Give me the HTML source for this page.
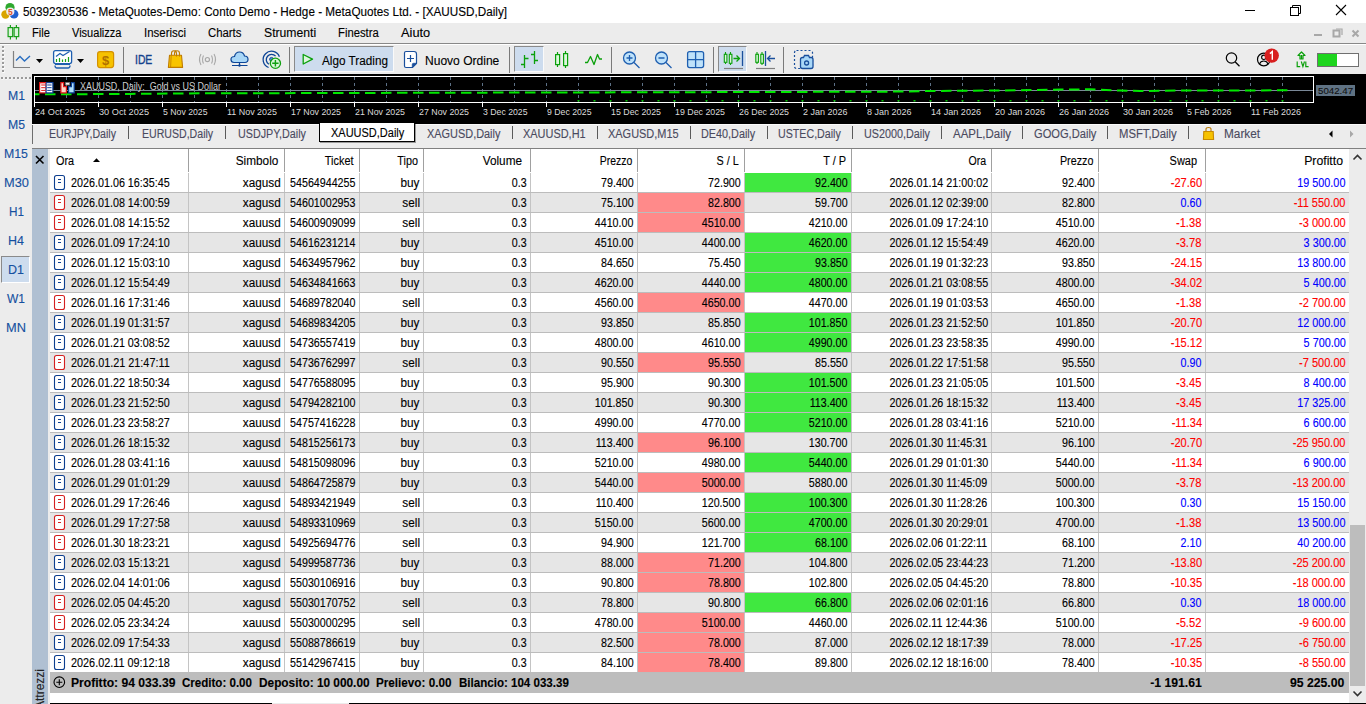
<!DOCTYPE html><html><head><meta charset="utf-8"><style>
html,body{margin:0;padding:0;}
body{width:1366px;height:704px;overflow:hidden;position:relative;background:#ececec;font-family:"Liberation Sans",sans-serif;}
.t{position:absolute;white-space:pre;-webkit-text-stroke:0.12px currentColor;}
.b{position:absolute;}
.s{position:absolute;overflow:visible;}
</style></head><body>
<div class="b" style="left:0px;top:0px;width:1366px;height:23px;background:#ffffff;"></div>
<div class="t" style="left:22.80px;top:4.34px;font-size:12px;line-height:16px;color:#000;font-weight:normal;transform:scaleX(0.9768);transform-origin:0 0;">5039230536 - MetaQuotes-Demo: Conto Demo - Hedge - MetaQuotes Ltd. - [XAUUSD,Daily]</div>
<svg class="s" style="left:0px;top:0px" width="20" height="20" viewBox="0 0 20 20"><circle cx="10" cy="7.5" r="4.6" fill="#2ea82e"/><circle cx="5.5" cy="14.5" r="4.2" fill="#d9a400"/><circle cx="14" cy="14.2" r="4.4" fill="#1f5fd0"/><circle cx="10.3" cy="11.6" r="4.1" fill="#eeeeee"/><text x="10.4" y="15" font-size="8.5" font-family="Liberation Sans" font-weight="bold" fill="#e0501e" text-anchor="middle">5</text></svg>
<div class="b" style="left:1245px;top:10px;width:10px;height:1px;background:#000;"></div>
<svg class="s" style="left:1289px;top:4px" width="13" height="13" viewBox="0 0 13 13"><rect x="1.5" y="3.5" width="8" height="8" fill="none" stroke="#000"/><path d="M3.5 3.5V1.5H11.5V9.5H9.5" fill="none" stroke="#000"/></svg>
<svg class="s" style="left:1335px;top:4px" width="13" height="13" viewBox="0 0 13 13"><path d="M1 1L11 11M11 1L1 11" stroke="#000" stroke-width="1.1"/></svg>
<div class="b" style="left:0px;top:23px;width:1366px;height:20px;background:#ececec;"></div>
<div class="b" style="left:0px;top:43px;width:1366px;height:1px;background:#888888;"></div>
<div class="b" style="left:0px;top:44px;width:1366px;height:1px;background:#ffffff;"></div>
<svg class="s" style="left:7px;top:24px" width="14" height="17" viewBox="0 0 14 17"><path d="M3.4 1V15.5M9.4 1V15.5" stroke="#1a9e1a" stroke-width="1.2"/><rect x="1.1" y="3.6" width="4.6" height="9" fill="#d8f5d8" stroke="#1a9e1a" stroke-width="1.2"/><rect x="7.1" y="3.6" width="4.6" height="9" fill="#d8f5d8" stroke="#1a9e1a" stroke-width="1.2"/></svg>
<div class="t" style="left:32.00px;top:24.54px;font-size:12px;line-height:16px;color:#000;font-weight:normal;transform:scaleX(0.9317);transform-origin:0 0;">File</div>
<div class="t" style="left:72.30px;top:24.54px;font-size:12px;line-height:16px;color:#000;font-weight:normal;transform:scaleX(0.9187);transform-origin:0 0;">Visualizza</div>
<div class="t" style="left:143.90px;top:24.54px;font-size:12px;line-height:16px;color:#000;font-weight:normal;transform:scaleX(0.9537);transform-origin:0 0;">Inserisci</div>
<div class="t" style="left:208.20px;top:24.54px;font-size:12px;line-height:16px;color:#000;font-weight:normal;transform:scaleX(0.9463);transform-origin:0 0;">Charts</div>
<div class="t" style="left:263.80px;top:24.54px;font-size:12px;line-height:16px;color:#000;font-weight:normal;transform:scaleX(1.0164);transform-origin:0 0;">Strumenti</div>
<div class="t" style="left:338.00px;top:24.54px;font-size:12px;line-height:16px;color:#000;font-weight:normal;transform:scaleX(0.9392);transform-origin:0 0;">Finestra</div>
<div class="t" style="left:400.80px;top:24.54px;font-size:12px;line-height:16px;color:#000;font-weight:normal;transform:scaleX(1.0673);transform-origin:0 0;">Aiuto</div>
<div class="b" style="left:1314px;top:34px;width:8px;height:2px;background:#a8a8a8;"></div>
<svg class="s" style="left:1332px;top:27px" width="11" height="11" viewBox="0 0 11 11"><rect x="1.5" y="3.5" width="6" height="6" fill="none" stroke="#a8a8a8" stroke-width="2"/><path d="M4 2H10V8" fill="none" stroke="#a8a8a8" stroke-width="1.2"/></svg>
<svg class="s" style="left:1351px;top:29px" width="10" height="9" viewBox="0 0 10 9"><path d="M1.5 1.5L7.5 7.5M7.5 1.5L1.5 7.5" stroke="#a8a8a8" stroke-width="2"/></svg>
<div class="b" style="left:0px;top:45px;width:1366px;height:29px;background:#ececec;"></div>
<svg class="s" style="left:0px;top:0px" width="4" height="80" viewBox="0 0 4 80"><rect x="2.5" y="47" width="2" height="2" fill="#fff"/><rect x="2" y="46" width="2" height="2" fill="#9a9a9a"/><rect x="2.5" y="51" width="2" height="2" fill="#fff"/><rect x="2" y="50" width="2" height="2" fill="#9a9a9a"/><rect x="2.5" y="55" width="2" height="2" fill="#fff"/><rect x="2" y="54" width="2" height="2" fill="#9a9a9a"/><rect x="2.5" y="59" width="2" height="2" fill="#fff"/><rect x="2" y="58" width="2" height="2" fill="#9a9a9a"/><rect x="2.5" y="63" width="2" height="2" fill="#fff"/><rect x="2" y="62" width="2" height="2" fill="#9a9a9a"/><rect x="2.5" y="67" width="2" height="2" fill="#fff"/><rect x="2" y="66" width="2" height="2" fill="#9a9a9a"/><rect x="2.5" y="71" width="2" height="2" fill="#fff"/><rect x="2" y="70" width="2" height="2" fill="#9a9a9a"/></svg>
<svg class="s" style="left:0px;top:44px" width="140" height="30" viewBox="0 0 140 30"><path d="M13.5 7V23.5H30" fill="none" stroke="#808080" stroke-width="1.2"/><path d="M16 16.5L20 12.5L24.5 17L30 12" fill="none" stroke="#2a6ec0" stroke-width="1.4"/><path d="M36 15H43L39.5 19Z" fill="#000"/><rect x="53.6" y="6.6" width="18" height="13" rx="2" fill="#fff" stroke="#1f5fb0" stroke-width="1.3"/><path d="M56 12.5L60 9.5L63 11.5L69.5 7.5" fill="none" stroke="#1f5fb0" stroke-width="1.2"/><path d="M56.5 18V15M59.5 18V14M62.5 18V15.5M65.5 18V15M68.5 18V13" stroke="#19a019" stroke-width="1.2"/><path d="M55 21.5Q55 24 57 24H68Q70 24 70 21.5" fill="none" stroke="#1f5fb0" stroke-width="1.3"/><path d="M55 20.5H70" stroke="#1f5fb0" stroke-width="1"/><path d="M77 15H84L80.5 19Z" fill="#000"/><rect x="97.6" y="7.6" width="16" height="16" rx="2.5" fill="#f6c200" stroke="#d49100" stroke-width="1.2"/><text x="105.6" y="20.5" font-family="Liberation Sans" font-size="13" font-weight="bold" fill="#b07000" text-anchor="middle">$</text></svg>
<div class="b" style="left:123px;top:47px;width:1px;height:26px;background:#7a7a7a;"></div>
<div class="t" style="left:134.70px;top:52.34px;font-size:12px;line-height:16px;color:#14418c;font-weight:normal;transform:scaleX(0.8633);transform-origin:0 0;-webkit-text-stroke:0.35px #14418c;">IDE</div>
<svg class="s" style="left:160px;top:44px" width="130" height="30" viewBox="0 0 130 30"><path d="M9.5 11.2H21.5L22.6 23.4H8.4Z" fill="#f8c400" stroke="#c07c00" stroke-width="1.1" stroke-linejoin="round"/><path d="M11.2 11.5L10.6 23.2" stroke="#c07c00" stroke-width="0.8"/><path d="M11.5 11.5V9.5Q11.5 6.8 14 6.8Q16.5 6.8 16.5 9.5V12.5M14.5 11V9.5Q14.5 6.8 17 6.8Q19.5 6.8 19.5 9.5V12.5" fill="none" stroke="#c07c00" stroke-width="1.1"/><circle cx="47.4" cy="15.6" r="2.1" fill="none" stroke="#a8a8a8" stroke-width="1.2"/><path d="M43.5 11.5Q41.5 15.5 43.5 19.5M51.5 11.5Q53.5 15.5 51.5 19.5M41 10Q38 15.5 41 21M54 10Q57 15.5 54 21" fill="none" stroke="#a8a8a8" stroke-width="1.1"/><path d="M74 18.5Q71 18.5 71 15.5Q71 12.5 74.5 12.5Q75.5 8 79.5 8Q83.5 8 84.5 12Q88 12 88 15.3Q88 18.5 85 18.5Z" fill="#a9d7f7" stroke="#0d4596" stroke-width="1.2"/><path d="M79.5 18.5V21.5M72 21.5H87.5" stroke="#0d4596" stroke-width="1.2"/><circle cx="79.5" cy="21.5" r="1.2" fill="#0d4596"/><path d="M108.6 23.5A8.4 8.4 0 1 1 119.4 12.7" fill="none" stroke="#0d4596" stroke-width="1.3"/><path d="M108.85 20.2A5.3 5.3 0 1 1 115.6 12.2" fill="none" stroke="#0d4596" stroke-width="1.3"/><circle cx="111.5" cy="15.3" r="1.9" fill="#4a90d8" stroke="#0d4596" stroke-width="0.9"/><circle cx="115.4" cy="19.3" r="5.1" fill="#d8f6d8" stroke="#11a011" stroke-width="1.3"/><path d="M115.4 16.1V22.5M112.2 19.3H118.6" stroke="#11a011" stroke-width="1.4"/></svg>
<div class="b" style="left:289px;top:47px;width:1px;height:26px;background:#7a7a7a;"></div>
<div class="b" style="left:294px;top:46px;width:100px;height:26px;background:#cddcee;box-sizing:border-box;border-top:1px solid #8a8a8a;border-left:1px solid #8a8a8a;border-right:1px solid #fafafa;border-bottom:1px solid #fafafa;"></div>
<svg class="s" style="left:294px;top:44px" width="130" height="30" viewBox="0 0 130 30"><path d="M9.2 10.5L18.5 15.2L9.2 20Z" fill="#ddf6dd" stroke="#0ba00b" stroke-width="1.3" stroke-linejoin="round"/><path d="M112 7.5H120Q122.5 7.5 122.5 10V19.5L118.5 23.5H112Q110.5 23.5 110.5 22V9Q110.5 7.5 112 7.5Z" fill="#fff" stroke="#1a4f9c" stroke-width="1.2"/><path d="M118.3 23.6L122.6 19.3H119.5Q118.3 19.3 118.3 20.5Z" fill="#1a4f9c" stroke="#1a4f9c" stroke-width="0.8"/><path d="M116.5 11V18M113 14.5H120" stroke="#1a4f9c" stroke-width="1.2"/></svg>
<div class="t" style="left:322.30px;top:52.64px;font-size:12px;line-height:16px;color:#000;font-weight:normal;transform:scaleX(0.9789);transform-origin:0 0;">Algo Trading</div>
<div class="t" style="left:424.50px;top:52.64px;font-size:12px;line-height:16px;color:#000;font-weight:normal;transform:scaleX(1.0035);transform-origin:0 0;">Nuovo Ordine</div>
<div class="b" style="left:509px;top:47px;width:1px;height:26px;background:#7a7a7a;"></div>
<div class="b" style="left:514px;top:46px;width:30px;height:26px;background:#cddcee;box-sizing:border-box;border-top:1px solid #8a8a8a;border-left:1px solid #8a8a8a;border-right:1px solid #fafafa;border-bottom:1px solid #fafafa;"></div>
<svg class="s" style="left:510px;top:44px" width="300" height="30" viewBox="0 0 300 30"><path d="M14.5 11V24M11 20.5H14.5M14.5 14.5H18.5M24.5 7V20M21 10.5H24.5M24.5 16.5H28" fill="none" stroke="#0ba00b" stroke-width="1.3"/><path d="M47.5 8V23M55.5 7V24" stroke="#0ba00b" stroke-width="1.2"/><rect x="45.6" y="10.6" width="4" height="10" fill="#dcf8dc" stroke="#0ba00b" stroke-width="1.2"/><rect x="53.6" y="9.6" width="4" height="12" fill="#dcf8dc" stroke="#0ba00b" stroke-width="1.2"/><path d="M75 18.5H77.5L80.5 12.5L84 20.5L87.5 10.5L89.5 15H92" fill="none" stroke="#0ba00b" stroke-width="1.3" stroke-linejoin="round"/></svg>
<div class="b" style="left:611px;top:47px;width:1px;height:26px;background:#7a7a7a;"></div>
<svg class="s" style="left:610px;top:44px" width="110" height="30" viewBox="0 0 110 30"><circle cx="19.5" cy="14" r="6" fill="#bfe2fa" stroke="#1f5fb0" stroke-width="1.3"/><path d="M24 18.5L29.5 24M16.5 14H22.5M19.5 11V17" stroke="#1f5fb0" stroke-width="1.3"/><circle cx="51.5" cy="14" r="6" fill="#bfe2fa" stroke="#1f5fb0" stroke-width="1.3"/><path d="M56 18.5L61.5 24M48.5 14H54.5" stroke="#1f5fb0" stroke-width="1.3"/><rect x="77.6" y="7.6" width="16" height="16" rx="2" fill="#bfe2fa" stroke="#1f5fb0" stroke-width="1.3"/><path d="M85.6 7.6V23.6M77.6 15.6H93.6" stroke="#1f5fb0" stroke-width="1.3"/></svg>
<div class="b" style="left:713px;top:47px;width:1px;height:26px;background:#7a7a7a;"></div>
<div class="b" style="left:718px;top:46px;width:29px;height:26px;background:#cddcee;box-sizing:border-box;border-top:1px solid #8a8a8a;border-left:1px solid #8a8a8a;border-right:1px solid #fafafa;border-bottom:1px solid #fafafa;"></div>
<svg class="s" style="left:715px;top:44px" width="110" height="30" viewBox="0 0 110 30"><path d="M10.5 8V20M15.5 8V21" stroke="#0ba00b" stroke-width="1.1"/><rect x="9.3" y="10.3" width="2.6" height="8" fill="#dcf8dc" stroke="#0ba00b" stroke-width="1.1"/><rect x="14.3" y="10.3" width="2.6" height="9" fill="#dcf8dc" stroke="#0ba00b" stroke-width="1.1"/><path d="M18.5 14.5H24.5M21.5 11.5L24.5 14.5L21.5 17.5" fill="none" stroke="#0ba00b" stroke-width="1.3"/><path d="M27.5 7V22" stroke="#1a4f9c" stroke-width="1.3"/><path d="M9 24.5H28" stroke="#808080" stroke-width="1.2"/><path d="M42 8V20M47 8V21" stroke="#0ba00b" stroke-width="1.1"/><rect x="40.8" y="10.3" width="2.6" height="8" fill="#dcf8dc" stroke="#0ba00b" stroke-width="1.1"/><rect x="45.8" y="10.3" width="2.6" height="9" fill="#dcf8dc" stroke="#0ba00b" stroke-width="1.1"/><path d="M50.5 7V22" stroke="#1a4f9c" stroke-width="1.3"/><path d="M52.5 14.5H60M55.5 11.5L52.5 14.5L55.5 17.5" fill="none" stroke="#1a4f9c" stroke-width="1.3"/><path d="M41 24.5H60" stroke="#808080" stroke-width="1.2"/></svg>
<div class="b" style="left:783px;top:47px;width:1px;height:26px;background:#7a7a7a;"></div>
<svg class="s" style="left:790px;top:44px" width="30" height="30" viewBox="0 0 30 30"><rect x="4.5" y="6.5" width="18" height="18" rx="2" fill="none" stroke="#1a4f9c" stroke-width="1.2" stroke-dasharray="2 2"/><path d="M10.5 15.5Q10.5 13.5 12.5 13.5H13.5L14.5 11.5H18.5L19.5 13.5H21Q23 13.5 23 15.5V22.5Q23 24.5 21 24.5H12.5Q10.5 24.5 10.5 22.5Z" fill="#a9d7f7" stroke="#1a4f9c" stroke-width="1.3"/><circle cx="16.6" cy="19" r="2" fill="none" stroke="#1a4f9c" stroke-width="1.3"/></svg>
<svg class="s" style="left:1220px;top:44px" width="146" height="30" viewBox="0 0 146 30"><circle cx="11.5" cy="14" r="5.2" fill="none" stroke="#000" stroke-width="1.2"/><path d="M15.3 18L19.5 22.2" stroke="#000" stroke-width="1.3"/><circle cx="43.8" cy="15.5" r="6.3" fill="none" stroke="#000" stroke-width="1.2"/><circle cx="43.8" cy="13.3" r="2.2" fill="none" stroke="#000" stroke-width="1.1"/><path d="M39.5 20Q40.5 17 43.8 17Q47 17 48 20" fill="none" stroke="#000" stroke-width="1.1"/><circle cx="51.7" cy="11.6" r="7.2" fill="#d81e1e"/><path d="M49.9 9.6L52.3 7.6V15.8" fill="none" stroke="#fff" stroke-width="1.4"/><path d="M81.5 15V11M78 11.5L81.5 8L85 11.5H83V15H80V11.5Z" fill="none" stroke="#0ba00b" stroke-width="1.2" stroke-linejoin="round"/><path d="M77.2 17.5V22.6H80.2M81.3 17.5L82.9 22.6L84.5 17.5M85.8 17.5V22.6H88.6" fill="none" stroke="#0ba00b" stroke-width="1.2"/><rect x="97.5" y="9.5" width="41" height="13" fill="#fff" stroke="#707070"/><rect x="98" y="10" width="19" height="12" fill="#1dd51d"/></svg>
<div class="b" style="left:0px;top:74px;width:32px;height:630px;background:#ececec;"></div>
<div class="b" style="left:32px;top:74px;width:1334px;height:50px;background:#000;"></div>
<svg class="s" style="left:0px;top:75px" width="32" height="6" viewBox="0 0 32 6"><rect x="1.5" y="2.5" width="2" height="2" fill="#fff"/><rect x="1" y="2" width="2" height="2" fill="#9a9a9a"/><rect x="5.5" y="2.5" width="2" height="2" fill="#fff"/><rect x="5" y="2" width="2" height="2" fill="#9a9a9a"/><rect x="9.5" y="2.5" width="2" height="2" fill="#fff"/><rect x="9" y="2" width="2" height="2" fill="#9a9a9a"/><rect x="13.5" y="2.5" width="2" height="2" fill="#fff"/><rect x="13" y="2" width="2" height="2" fill="#9a9a9a"/><rect x="17.5" y="2.5" width="2" height="2" fill="#fff"/><rect x="17" y="2" width="2" height="2" fill="#9a9a9a"/><rect x="21.5" y="2.5" width="2" height="2" fill="#fff"/><rect x="21" y="2" width="2" height="2" fill="#9a9a9a"/><rect x="25.5" y="2.5" width="2" height="2" fill="#fff"/><rect x="25" y="2" width="2" height="2" fill="#9a9a9a"/><rect x="29.5" y="2.5" width="2" height="2" fill="#fff"/><rect x="29" y="2" width="2" height="2" fill="#9a9a9a"/></svg>
<div class="b" style="left:1px;top:256px;width:29px;height:27px;background:#cddcee;box-sizing:border-box;border-top:1px solid #8a8a8a;border-left:1px solid #8a8a8a;border-right:1px solid #fff;border-bottom:1px solid #fff;"></div>
<div class="t" style="left:7.50px;top:88.34px;font-size:12px;line-height:16px;color:#1550a0;font-weight:normal;transform:scaleX(1.0192);transform-origin:0 0;">M1</div>
<div class="t" style="left:7.50px;top:117.34px;font-size:12px;line-height:16px;color:#1550a0;font-weight:normal;transform:scaleX(1.0192);transform-origin:0 0;">M5</div>
<div class="t" style="left:4.00px;top:146.34px;font-size:12px;line-height:16px;color:#1550a0;font-weight:normal;transform:scaleX(1.0256);transform-origin:0 0;">M15</div>
<div class="t" style="left:3.50px;top:175.34px;font-size:12px;line-height:16px;color:#1550a0;font-weight:normal;transform:scaleX(1.0684);transform-origin:0 0;">M30</div>
<div class="t" style="left:8.50px;top:204.34px;font-size:12px;line-height:16px;color:#1550a0;font-weight:normal;transform:scaleX(0.9766);transform-origin:0 0;">H1</div>
<div class="t" style="left:8.00px;top:233.34px;font-size:12px;line-height:16px;color:#1550a0;font-weight:normal;transform:scaleX(1.0417);transform-origin:0 0;">H4</div>
<div class="t" style="left:8.00px;top:262.34px;font-size:12px;line-height:16px;color:#1550a0;font-weight:normal;transform:scaleX(1.0417);transform-origin:0 0;">D1</div>
<div class="t" style="left:7.00px;top:291.34px;font-size:12px;line-height:16px;color:#1550a0;font-weight:normal;transform:scaleX(1.0000);transform-origin:0 0;">W1</div>
<div class="t" style="left:6.00px;top:320.34px;font-size:12px;line-height:16px;color:#1550a0;font-weight:normal;transform:scaleX(1.0684);transform-origin:0 0;">MN</div>
<svg class="s" style="left:32px;top:74px" width="1334" height="50" viewBox="0 0 1334 50"><path d="M34.5 3V28" stroke="#5d7186" stroke-width="1" stroke-dasharray="3 3"/><path d="M66.5 3V28" stroke="#5d7186" stroke-width="1" stroke-dasharray="3 3"/><path d="M98.5 3V28" stroke="#5d7186" stroke-width="1" stroke-dasharray="3 3"/><path d="M130.5 3V28" stroke="#5d7186" stroke-width="1" stroke-dasharray="3 3"/><path d="M162.5 3V28" stroke="#5d7186" stroke-width="1" stroke-dasharray="3 3"/><path d="M194.5 3V28" stroke="#5d7186" stroke-width="1" stroke-dasharray="3 3"/><path d="M226.5 3V28" stroke="#5d7186" stroke-width="1" stroke-dasharray="3 3"/><path d="M258.5 3V28" stroke="#5d7186" stroke-width="1" stroke-dasharray="3 3"/><path d="M290.5 3V28" stroke="#5d7186" stroke-width="1" stroke-dasharray="3 3"/><path d="M322.5 3V28" stroke="#5d7186" stroke-width="1" stroke-dasharray="3 3"/><path d="M354.5 3V28" stroke="#5d7186" stroke-width="1" stroke-dasharray="3 3"/><path d="M386.5 3V28" stroke="#5d7186" stroke-width="1" stroke-dasharray="3 3"/><path d="M418.5 3V28" stroke="#5d7186" stroke-width="1" stroke-dasharray="3 3"/><path d="M450.5 3V28" stroke="#5d7186" stroke-width="1" stroke-dasharray="3 3"/><path d="M482.5 3V28" stroke="#5d7186" stroke-width="1" stroke-dasharray="3 3"/><path d="M514.5 3V28" stroke="#5d7186" stroke-width="1" stroke-dasharray="3 3"/><path d="M546.5 3V28" stroke="#5d7186" stroke-width="1" stroke-dasharray="3 3"/><path d="M578.5 3V28" stroke="#5d7186" stroke-width="1" stroke-dasharray="3 3"/><path d="M610.5 3V28" stroke="#5d7186" stroke-width="1" stroke-dasharray="3 3"/><path d="M642.5 3V28" stroke="#5d7186" stroke-width="1" stroke-dasharray="3 3"/><path d="M674.5 3V28" stroke="#5d7186" stroke-width="1" stroke-dasharray="3 3"/><path d="M706.5 3V28" stroke="#5d7186" stroke-width="1" stroke-dasharray="3 3"/><path d="M738.5 3V28" stroke="#5d7186" stroke-width="1" stroke-dasharray="3 3"/><path d="M770.5 3V28" stroke="#5d7186" stroke-width="1" stroke-dasharray="3 3"/><path d="M802.5 3V28" stroke="#5d7186" stroke-width="1" stroke-dasharray="3 3"/><path d="M834.5 3V28" stroke="#5d7186" stroke-width="1" stroke-dasharray="3 3"/><path d="M866.5 3V28" stroke="#5d7186" stroke-width="1" stroke-dasharray="3 3"/><path d="M898.5 3V28" stroke="#5d7186" stroke-width="1" stroke-dasharray="3 3"/><path d="M930.5 3V28" stroke="#5d7186" stroke-width="1" stroke-dasharray="3 3"/><path d="M962.5 3V28" stroke="#5d7186" stroke-width="1" stroke-dasharray="3 3"/><path d="M994.5 3V28" stroke="#5d7186" stroke-width="1" stroke-dasharray="3 3"/><path d="M1026.5 3V28" stroke="#5d7186" stroke-width="1" stroke-dasharray="3 3"/><path d="M1058.5 3V28" stroke="#5d7186" stroke-width="1" stroke-dasharray="3 3"/><path d="M1090.5 3V28" stroke="#5d7186" stroke-width="1" stroke-dasharray="3 3"/><path d="M1122.5 3V28" stroke="#5d7186" stroke-width="1" stroke-dasharray="3 3"/><path d="M1154.5 3V28" stroke="#5d7186" stroke-width="1" stroke-dasharray="3 3"/><path d="M1186.5 3V28" stroke="#5d7186" stroke-width="1" stroke-dasharray="3 3"/><path d="M1218.5 3V28" stroke="#5d7186" stroke-width="1" stroke-dasharray="3 3"/><path d="M1250.5 3V28" stroke="#5d7186" stroke-width="1" stroke-dasharray="3 3"/><path d="M3 16.5H1281" stroke="#7a8898" stroke-width="1"/><path d="M3.0 20.3 L48.0 20.2 L98.0 19.9 L168.0 19.3 L268.0 19.1 L468.0 18.6 L618.0 18.3 L768.0 17.9 L868.0 17.6 L898.0 17.0 L968.0 16.5 L1028.0 15.6 L1058.0 15.3 L1088.0 16.5 L1108.0 17.0 L1148.0 16.5 L1188.0 16.5 L1256.0 16.3" fill="none" stroke="#00e800" stroke-width="2" stroke-dasharray="10.5 5.5" stroke-dashoffset="6"/><rect x="545.5" y="26" width="2" height="1.5" fill="#00c000"/><rect x="561.5" y="26" width="2" height="1.5" fill="#00c000"/><rect x="577.5" y="26" width="2" height="1.5" fill="#00c000"/><rect x="593.5" y="26" width="2" height="1.5" fill="#00c000"/><rect x="609.5" y="26" width="2" height="1.5" fill="#00c000"/><rect x="625.5" y="26" width="2" height="1.5" fill="#00c000"/><rect x="641.5" y="26" width="2" height="1.5" fill="#00c000"/><rect x="657.5" y="26" width="2" height="1.5" fill="#00c000"/><rect x="673.5" y="26" width="2" height="1.5" fill="#00c000"/><rect x="689.5" y="26" width="2" height="1.5" fill="#00c000"/><rect x="705.5" y="26" width="2" height="1.5" fill="#00c000"/><rect x="721.5" y="26" width="2" height="1.5" fill="#00c000"/><rect x="737.5" y="26" width="2" height="1.5" fill="#00c000"/><rect x="753.5" y="26" width="2" height="1.5" fill="#00c000"/><rect x="769.5" y="26" width="2" height="1.5" fill="#00c000"/><rect x="785.5" y="26" width="2" height="1.5" fill="#00c000"/><rect x="801.5" y="26" width="2" height="1.5" fill="#00c000"/><rect x="817.5" y="26" width="2" height="1.5" fill="#00c000"/><rect x="833.5" y="26" width="2" height="1.5" fill="#00c000"/><rect x="849.5" y="26" width="2" height="1.5" fill="#00c000"/><rect x="865.5" y="26" width="2" height="1.5" fill="#00c000"/><rect x="881.5" y="26" width="2" height="1.5" fill="#00c000"/><rect x="897.5" y="26" width="2" height="1.5" fill="#00c000"/><rect x="913.5" y="26" width="2" height="1.5" fill="#00c000"/><rect x="929.5" y="26" width="2" height="1.5" fill="#00c000"/><rect x="945.5" y="26" width="2" height="1.5" fill="#00c000"/><rect x="961.5" y="26" width="2" height="1.5" fill="#00c000"/><rect x="977.5" y="26" width="2" height="1.5" fill="#00c000"/><rect x="993.5" y="26" width="2" height="1.5" fill="#00c000"/><rect x="1009.5" y="26" width="2" height="1.5" fill="#00c000"/><rect x="1025.5" y="26" width="2" height="1.5" fill="#00c000"/><rect x="1041.5" y="26" width="2" height="1.5" fill="#00c000"/><rect x="1057.5" y="26" width="2" height="1.5" fill="#00c000"/><rect x="1073.5" y="26" width="2" height="1.5" fill="#00c000"/><rect x="1089.5" y="26" width="2" height="1.5" fill="#00c000"/><rect x="1105.5" y="26" width="2" height="1.5" fill="#00c000"/><rect x="1121.5" y="26" width="2" height="1.5" fill="#00c000"/><rect x="1137.5" y="26" width="2" height="1.5" fill="#00c000"/><rect x="1153.5" y="26" width="2" height="1.5" fill="#00c000"/><rect x="1169.5" y="26" width="2" height="1.5" fill="#00c000"/><rect x="1185.5" y="26" width="2" height="1.5" fill="#00c000"/><rect x="1201.5" y="26" width="2" height="1.5" fill="#00c000"/><rect x="1217.5" y="26" width="2" height="1.5" fill="#00c000"/><rect x="1233.5" y="26" width="2" height="1.5" fill="#00c000"/><rect x="1249.5" y="26" width="2" height="1.5" fill="#00c000"/><rect x="2.5" y="2.5" width="1279" height="26" fill="none" stroke="#fff" stroke-width="1"/><path d="M2.5 28V33" stroke="#fff" stroke-width="1"/><path d="M66.5 28V33" stroke="#fff" stroke-width="1"/><path d="M130.5 28V33" stroke="#fff" stroke-width="1"/><path d="M194.5 28V33" stroke="#fff" stroke-width="1"/><path d="M258.5 28V33" stroke="#fff" stroke-width="1"/><path d="M322.5 28V33" stroke="#fff" stroke-width="1"/><path d="M386.5 28V33" stroke="#fff" stroke-width="1"/><path d="M450.5 28V33" stroke="#fff" stroke-width="1"/><path d="M514.5 28V33" stroke="#fff" stroke-width="1"/><path d="M578.5 28V33" stroke="#fff" stroke-width="1"/><path d="M642.5 28V33" stroke="#fff" stroke-width="1"/><path d="M706.5 28V33" stroke="#fff" stroke-width="1"/><path d="M770.5 28V33" stroke="#fff" stroke-width="1"/><path d="M834.5 28V33" stroke="#fff" stroke-width="1"/><path d="M898.5 28V33" stroke="#fff" stroke-width="1"/><path d="M962.5 28V33" stroke="#fff" stroke-width="1"/><path d="M1026.5 28V33" stroke="#fff" stroke-width="1"/><path d="M1090.5 28V33" stroke="#fff" stroke-width="1"/><path d="M1154.5 28V33" stroke="#fff" stroke-width="1"/><path d="M1218.5 28V33" stroke="#fff" stroke-width="1"/><rect x="1284" y="11" width="39" height="11" fill="#5f7283"/></svg>
<div class="t" style="left:1318.00px;top:85.21px;font-size:9.5px;line-height:12px;color:#101010;font-weight:normal;transform:scaleX(1.0206);transform-origin:0 0;-webkit-text-stroke:0.1px #101010;">5042.47</div>
<div class="t" style="left:34.50px;top:105.71px;font-size:9.5px;line-height:12px;color:#dcdcdc;font-weight:normal;transform:scaleX(0.9657);transform-origin:0 0;-webkit-text-stroke:0;">24 Oct 2025</div>
<div class="t" style="left:98.50px;top:105.71px;font-size:9.5px;line-height:12px;color:#dcdcdc;font-weight:normal;transform:scaleX(0.9657);transform-origin:0 0;-webkit-text-stroke:0;">30 Oct 2025</div>
<div class="t" style="left:162.50px;top:105.71px;font-size:9.5px;line-height:12px;color:#dcdcdc;font-weight:normal;transform:scaleX(0.9167);transform-origin:0 0;-webkit-text-stroke:0;">5 Nov 2025</div>
<div class="t" style="left:226.50px;top:105.71px;font-size:9.5px;line-height:12px;color:#dcdcdc;font-weight:normal;transform:scaleX(0.9398);transform-origin:0 0;-webkit-text-stroke:0;">11 Nov 2025</div>
<div class="t" style="left:290.50px;top:105.71px;font-size:9.5px;line-height:12px;color:#dcdcdc;font-weight:normal;transform:scaleX(0.9282);transform-origin:0 0;-webkit-text-stroke:0;">17 Nov 2025</div>
<div class="t" style="left:354.50px;top:105.71px;font-size:9.5px;line-height:12px;color:#dcdcdc;font-weight:normal;transform:scaleX(0.9282);transform-origin:0 0;-webkit-text-stroke:0;">21 Nov 2025</div>
<div class="t" style="left:418.50px;top:105.71px;font-size:9.5px;line-height:12px;color:#dcdcdc;font-weight:normal;transform:scaleX(0.9282);transform-origin:0 0;-webkit-text-stroke:0;">27 Nov 2025</div>
<div class="t" style="left:482.50px;top:105.71px;font-size:9.5px;line-height:12px;color:#dcdcdc;font-weight:normal;transform:scaleX(0.9167);transform-origin:0 0;-webkit-text-stroke:0;">3 Dec 2025</div>
<div class="t" style="left:546.50px;top:105.71px;font-size:9.5px;line-height:12px;color:#dcdcdc;font-weight:normal;transform:scaleX(0.9167);transform-origin:0 0;-webkit-text-stroke:0;">9 Dec 2025</div>
<div class="t" style="left:610.50px;top:105.71px;font-size:9.5px;line-height:12px;color:#dcdcdc;font-weight:normal;transform:scaleX(0.9282);transform-origin:0 0;-webkit-text-stroke:0;">15 Dec 2025</div>
<div class="t" style="left:674.50px;top:105.71px;font-size:9.5px;line-height:12px;color:#dcdcdc;font-weight:normal;transform:scaleX(0.9282);transform-origin:0 0;-webkit-text-stroke:0;">19 Dec 2025</div>
<div class="t" style="left:738.50px;top:105.71px;font-size:9.5px;line-height:12px;color:#dcdcdc;font-weight:normal;transform:scaleX(0.9282);transform-origin:0 0;-webkit-text-stroke:0;">26 Dec 2025</div>
<div class="t" style="left:802.50px;top:105.71px;font-size:9.5px;line-height:12px;color:#dcdcdc;font-weight:normal;transform:scaleX(0.9463);transform-origin:0 0;-webkit-text-stroke:0;">2 Jan 2026</div>
<div class="t" style="left:866.50px;top:105.71px;font-size:9.5px;line-height:12px;color:#dcdcdc;font-weight:normal;transform:scaleX(0.9463);transform-origin:0 0;-webkit-text-stroke:0;">8 Jan 2026</div>
<div class="t" style="left:930.50px;top:105.71px;font-size:9.5px;line-height:12px;color:#dcdcdc;font-weight:normal;transform:scaleX(0.9569);transform-origin:0 0;-webkit-text-stroke:0;">14 Jan 2026</div>
<div class="t" style="left:994.50px;top:105.71px;font-size:9.5px;line-height:12px;color:#dcdcdc;font-weight:normal;transform:scaleX(0.9569);transform-origin:0 0;-webkit-text-stroke:0;">20 Jan 2026</div>
<div class="t" style="left:1058.50px;top:105.71px;font-size:9.5px;line-height:12px;color:#dcdcdc;font-weight:normal;transform:scaleX(0.9569);transform-origin:0 0;-webkit-text-stroke:0;">26 Jan 2026</div>
<div class="t" style="left:1122.50px;top:105.71px;font-size:9.5px;line-height:12px;color:#dcdcdc;font-weight:normal;transform:scaleX(0.9569);transform-origin:0 0;-webkit-text-stroke:0;">30 Jan 2026</div>
<div class="t" style="left:1186.50px;top:105.71px;font-size:9.5px;line-height:12px;color:#dcdcdc;font-weight:normal;transform:scaleX(0.9257);transform-origin:0 0;-webkit-text-stroke:0;">5 Feb 2026</div>
<div class="t" style="left:1250.50px;top:105.71px;font-size:9.5px;line-height:12px;color:#dcdcdc;font-weight:normal;transform:scaleX(0.9500);transform-origin:0 0;-webkit-text-stroke:0;">11 Feb 2026</div>
<svg class="s" style="left:38px;top:81px" width="40" height="14" viewBox="0 0 40 14"><rect x="1.6" y="1.6" width="6.5" height="10.3" fill="#fff" stroke="#e01818" stroke-width="1.2"/><rect x="8.1" y="1.6" width="6.8" height="10.3" fill="#fff" stroke="#0c3f96" stroke-width="1.2"/><path d="M2.3 1.6H8.1" stroke="#e01818" stroke-width="1.2"/><path d="M3.2 4H7.6M3.2 6.7H7.6M3.2 9.4H7.6" stroke="#e01818" stroke-width="1"/><path d="M9.2 4H13.6M9.2 6.7H13.6M9.2 9.4H13.6" stroke="#0c3f96" stroke-width="1"/><path d="M22.9 1.6H25.6V5.6H28.4V11.9H22.9Z" fill="#fcd6c8" stroke="#e01818" stroke-width="1.2"/><rect x="27.6" y="1.6" width="4" height="2.4" fill="#f0f0f0" stroke="#777" stroke-width="0.8"/><path d="M30.6 5.6H33.4V1.6H36.2V11.9H30.6Z" fill="#aee0fb" stroke="#0c3f96" stroke-width="1.2"/></svg>
<div class="t" style="left:80.00px;top:80.44px;font-size:10px;line-height:13px;color:#cfcfcf;font-weight:normal;transform:scaleX(0.8957);transform-origin:0 0;-webkit-text-stroke:0;">XAUUSD, Daily:  Gold vs US Dollar</div>
<div class="b" style="left:32px;top:124px;width:1334px;height:24px;background:#ececec;"></div>
<div class="b" style="left:32px;top:124px;width:1px;height:20px;background:#6e6e6e;"></div>
<div class="t" style="left:48.70px;top:126.44px;font-size:12px;line-height:16px;color:#4a4a5e;font-weight:normal;transform:scaleX(0.8834);transform-origin:0 0;">EURJPY,Daily</div>
<div class="t" style="left:141.60px;top:126.44px;font-size:12px;line-height:16px;color:#4a4a5e;font-weight:normal;transform:scaleX(0.8817);transform-origin:0 0;">EURUSD,Daily</div>
<div class="t" style="left:237.60px;top:126.44px;font-size:12px;line-height:16px;color:#4a4a5e;font-weight:normal;transform:scaleX(0.8966);transform-origin:0 0;">USDJPY,Daily</div>
<div class="t" style="left:427.10px;top:126.44px;font-size:12px;line-height:16px;color:#4a4a5e;font-weight:normal;transform:scaleX(0.9102);transform-origin:0 0;">XAGUSD,Daily</div>
<div class="t" style="left:523.10px;top:126.44px;font-size:12px;line-height:16px;color:#4a4a5e;font-weight:normal;transform:scaleX(0.9120);transform-origin:0 0;">XAUUSD,H1</div>
<div class="t" style="left:607.70px;top:126.44px;font-size:12px;line-height:16px;color:#4a4a5e;font-weight:normal;transform:scaleX(0.9134);transform-origin:0 0;">XAGUSD,M15</div>
<div class="t" style="left:701.40px;top:126.44px;font-size:12px;line-height:16px;color:#4a4a5e;font-weight:normal;transform:scaleX(0.9017);transform-origin:0 0;">DE40,Daily</div>
<div class="t" style="left:778.30px;top:126.44px;font-size:12px;line-height:16px;color:#4a4a5e;font-weight:normal;transform:scaleX(0.8885);transform-origin:0 0;">USTEC,Daily</div>
<div class="t" style="left:863.50px;top:126.44px;font-size:12px;line-height:16px;color:#4a4a5e;font-weight:normal;transform:scaleX(0.8988);transform-origin:0 0;">US2000,Daily</div>
<div class="t" style="left:953.10px;top:126.44px;font-size:12px;line-height:16px;color:#4a4a5e;font-weight:normal;transform:scaleX(0.9552);transform-origin:0 0;">AAPL,Daily</div>
<div class="t" style="left:1033.50px;top:126.44px;font-size:12px;line-height:16px;color:#4a4a5e;font-weight:normal;transform:scaleX(0.9269);transform-origin:0 0;">GOOG,Daily</div>
<div class="t" style="left:1119.30px;top:126.44px;font-size:12px;line-height:16px;color:#4a4a5e;font-weight:normal;transform:scaleX(0.9410);transform-origin:0 0;">MSFT,Daily</div>
<div class="t" style="left:1224.40px;top:126.44px;font-size:12px;line-height:16px;color:#4a4a5e;font-weight:normal;transform:scaleX(0.9858);transform-origin:0 0;">Market</div>
<div class="b" style="left:128px;top:126px;width:1px;height:13px;background:#5a5a5a;"></div>
<div class="b" style="left:225px;top:126px;width:1px;height:13px;background:#5a5a5a;"></div>
<div class="b" style="left:512px;top:126px;width:1px;height:13px;background:#5a5a5a;"></div>
<div class="b" style="left:597px;top:126px;width:1px;height:13px;background:#5a5a5a;"></div>
<div class="b" style="left:690px;top:126px;width:1px;height:13px;background:#5a5a5a;"></div>
<div class="b" style="left:767px;top:126px;width:1px;height:13px;background:#5a5a5a;"></div>
<div class="b" style="left:852px;top:126px;width:1px;height:13px;background:#5a5a5a;"></div>
<div class="b" style="left:941px;top:126px;width:1px;height:13px;background:#5a5a5a;"></div>
<div class="b" style="left:1022px;top:126px;width:1px;height:13px;background:#5a5a5a;"></div>
<div class="b" style="left:1107px;top:126px;width:1px;height:13px;background:#5a5a5a;"></div>
<div class="b" style="left:1188px;top:126px;width:1px;height:13px;background:#5a5a5a;"></div>
<div class="b" style="left:32px;top:124px;width:1334px;height:1px;background:#fafafa;"></div>
<div class="b" style="left:320px;top:142px;width:96px;height:1px;background:#9a9a9a;"></div>
<div class="b" style="left:415px;top:124px;width:1px;height:19px;background:#9a9a9a;"></div>
<div class="b" style="left:319px;top:123px;width:96px;height:19px;background:#fff;box-sizing:border-box;border-left:1px solid #000;border-right:1px solid #000;border-bottom:1px solid #000;"></div>
<div class="t" style="left:330.50px;top:125.04px;font-size:12px;line-height:16px;color:#000;font-weight:normal;transform:scaleX(0.9158);transform-origin:0 0;">XAUUSD,Daily</div>
<svg class="s" style="left:1200px;top:125px" width="16" height="18" viewBox="0 0 16 18"><path d="M6 6V4Q6 2.5 8.5 2.5Q11 2.5 11 4V6" fill="none" stroke="#b87800" stroke-width="1.1"/><path d="M3.8 6.5H13.2L13.6 14.5H3.4Z" fill="#f6c200" stroke="#c88a00" stroke-width="1.1"/></svg>
<svg class="s" style="left:1325px;top:128px" width="40" height="14" viewBox="0 0 40 14"><path d="M7.5 2.5L4 6L7.5 9.5Z" fill="#000"/><path d="M25 2.5L28.5 6L25 9.5Z" fill="#a8a8a8"/></svg>
<div class="b" style="left:32px;top:148px;width:1334px;height:1px;background:#808080;"></div>
<div class="b" style="left:32px;top:149px;width:16px;height:555px;background:#b0c0d2;"></div>
<div class="b" style="left:48px;top:149px;width:2px;height:555px;background:#ececec;"></div>
<div class="b" style="left:50px;top:149px;width:1299px;height:554px;background:#fff;"></div>
<svg class="s" style="left:34px;top:154px" width="12" height="12" viewBox="0 0 12 12"><path d="M2 2L9.5 9.5M9.5 2L2 9.5" stroke="#000" stroke-width="1.6"/></svg>
<div class="b" style="left:188px;top:149px;width:1px;height:23px;background:#a0a0a0;"></div>
<div class="b" style="left:284px;top:149px;width:1px;height:23px;background:#a0a0a0;"></div>
<div class="b" style="left:359px;top:149px;width:1px;height:23px;background:#a0a0a0;"></div>
<div class="b" style="left:423px;top:149px;width:1px;height:23px;background:#a0a0a0;"></div>
<div class="b" style="left:530px;top:149px;width:1px;height:23px;background:#a0a0a0;"></div>
<div class="b" style="left:637px;top:149px;width:1px;height:23px;background:#a0a0a0;"></div>
<div class="b" style="left:744px;top:149px;width:1px;height:23px;background:#a0a0a0;"></div>
<div class="b" style="left:851px;top:149px;width:1px;height:23px;background:#a0a0a0;"></div>
<div class="b" style="left:991px;top:149px;width:1px;height:23px;background:#a0a0a0;"></div>
<div class="b" style="left:1098px;top:149px;width:1px;height:23px;background:#a0a0a0;"></div>
<div class="b" style="left:1205px;top:149px;width:1px;height:23px;background:#a0a0a0;"></div>
<div class="t" style="left:56.40px;top:152.84px;font-size:12px;line-height:16px;color:#000;font-weight:normal;transform:scaleX(0.9032);transform-origin:0 0;">Ora</div>
<svg class="s" style="left:90px;top:155px" width="14" height="10" viewBox="0 0 14 10"><path d="M3 7H10L6.5 3.2Z" fill="#000"/></svg>
<div class="t" style="right:1087.37px;top:152.84px;font-size:12px;line-height:16px;color:#000;font-weight:normal;transform:scaleX(0.9834);transform-origin:100% 0;">Simbolo</div>
<div class="t" style="right:1012.00px;top:152.84px;font-size:12px;line-height:16px;color:#000;font-weight:normal;transform:scaleX(0.9094);transform-origin:100% 0;">Ticket</div>
<div class="t" style="right:948.32px;top:152.84px;font-size:12px;line-height:16px;color:#000;font-weight:normal;transform:scaleX(0.8988);transform-origin:100% 0;">Tipo</div>
<div class="t" style="right:843.76px;top:152.84px;font-size:12px;line-height:16px;color:#000;font-weight:normal;transform:scaleX(0.9830);transform-origin:100% 0;">Volume</div>
<div class="t" style="right:734.08px;top:152.84px;font-size:12px;line-height:16px;color:#000;font-weight:normal;transform:scaleX(0.8735);transform-origin:100% 0;">Prezzo</div>
<div class="t" style="right:627.14px;top:152.84px;font-size:12px;line-height:16px;color:#000;font-weight:normal;transform:scaleX(0.9021);transform-origin:100% 0;">S / L</div>
<div class="t" style="right:520.17px;top:152.84px;font-size:12px;line-height:16px;color:#000;font-weight:normal;transform:scaleX(0.9131);transform-origin:100% 0;">T / P</div>
<div class="t" style="right:380.13px;top:152.84px;font-size:12px;line-height:16px;color:#000;font-weight:normal;transform:scaleX(0.8782);transform-origin:100% 0;">Ora</div>
<div class="t" style="right:272.48px;top:152.84px;font-size:12px;line-height:16px;color:#000;font-weight:normal;transform:scaleX(0.8950);transform-origin:100% 0;">Prezzo</div>
<div class="t" style="right:168.68px;top:152.84px;font-size:12px;line-height:16px;color:#000;font-weight:normal;transform:scaleX(0.9133);transform-origin:100% 0;">Swap</div>
<div class="t" style="right:22.73px;top:152.84px;font-size:12px;line-height:16px;color:#000;font-weight:normal;transform:scaleX(1.0226);transform-origin:100% 0;">Profitto</div>
<div class="b" style="left:50px;top:173px;width:1299px;height:19px;background:#fff;"></div>
<div class="b" style="left:50px;top:192px;width:1299px;height:1px;background:#bcbcbc;"></div>
<div class="b" style="left:745px;top:173px;width:106px;height:19px;background:#40e840;"></div>
<div class="b" style="left:188px;top:173px;width:1px;height:19px;background:#c4c4c4;"></div>
<div class="b" style="left:284px;top:173px;width:1px;height:19px;background:#c4c4c4;"></div>
<div class="b" style="left:359px;top:173px;width:1px;height:19px;background:#c4c4c4;"></div>
<div class="b" style="left:423px;top:173px;width:1px;height:19px;background:#c4c4c4;"></div>
<div class="b" style="left:530px;top:173px;width:1px;height:19px;background:#c4c4c4;"></div>
<div class="b" style="left:637px;top:173px;width:1px;height:19px;background:#c4c4c4;"></div>
<div class="b" style="left:744px;top:173px;width:1px;height:19px;background:#c4c4c4;"></div>
<div class="b" style="left:851px;top:173px;width:1px;height:19px;background:#c4c4c4;"></div>
<div class="b" style="left:991px;top:173px;width:1px;height:19px;background:#c4c4c4;"></div>
<div class="b" style="left:1098px;top:173px;width:1px;height:19px;background:#c4c4c4;"></div>
<div class="b" style="left:1205px;top:173px;width:1px;height:19px;background:#c4c4c4;"></div>
<svg class="s" style="left:54px;top:175px" width="11" height="15" viewBox="0 0 11 15"><rect x="0.5" y="0.5" width="10" height="14" rx="2" fill="#fff" stroke="#0d3f8f" stroke-width="1.1"/><path d="M4 4.5H7M4 7.5H7" stroke="#0d3f8f" stroke-width="1.1"/></svg>
<div class="t" style="left:70.90px;top:175.34px;font-size:12px;line-height:16px;color:#000;font-weight:normal;transform:scaleX(0.8969);transform-origin:0 0;">2026.01.06 16:35:45</div>
<div class="t" style="right:1085.25px;top:175.34px;font-size:12px;line-height:16px;color:#000;font-weight:normal;transform:scaleX(0.9800);transform-origin:100% 0;">xagusd</div>
<div class="t" style="right:1010.33px;top:175.34px;font-size:12px;line-height:16px;color:#000;font-weight:normal;transform:scaleX(0.8900);transform-origin:100% 0;">54564944255</div>
<div class="t" style="right:946.27px;top:175.34px;font-size:12px;line-height:16px;color:#000;font-weight:normal;transform:scaleX(0.9800);transform-origin:100% 0;">buy</div>
<div class="t" style="right:839.30px;top:175.34px;font-size:12px;line-height:16px;color:#000;font-weight:normal;transform:scaleX(0.8900);transform-origin:100% 0;">0.3</div>
<div class="t" style="right:732.32px;top:175.34px;font-size:12px;line-height:16px;color:#000;font-weight:normal;transform:scaleX(0.8900);transform-origin:100% 0;">79.400</div>
<div class="t" style="right:625.32px;top:175.34px;font-size:12px;line-height:16px;color:#000;font-weight:normal;transform:scaleX(0.8900);transform-origin:100% 0;">72.900</div>
<div class="t" style="right:518.32px;top:175.34px;font-size:12px;line-height:16px;color:#000;font-weight:normal;transform:scaleX(0.8900);transform-origin:100% 0;">92.400</div>
<div class="t" style="right:378.25px;top:175.34px;font-size:12px;line-height:16px;color:#000;font-weight:normal;transform:scaleX(0.8948);transform-origin:100% 0;">2026.01.14 21:00:02</div>
<div class="t" style="right:271.32px;top:175.34px;font-size:12px;line-height:16px;color:#000;font-weight:normal;transform:scaleX(0.8900);transform-origin:100% 0;">92.400</div>
<div class="t" style="right:164.35px;top:175.34px;font-size:12px;line-height:16px;color:#ff0000;font-weight:normal;transform:scaleX(0.9205);transform-origin:100% 0;">-27.60</div>
<div class="t" style="right:20.32px;top:175.34px;font-size:12px;line-height:16px;color:#0000ff;font-weight:normal;transform:scaleX(0.9000);transform-origin:100% 0;">19 500.00</div>
<div class="b" style="left:50px;top:193px;width:1299px;height:19px;background:#e6e6e6;"></div>
<div class="b" style="left:50px;top:212px;width:1299px;height:1px;background:#bcbcbc;"></div>
<div class="b" style="left:638px;top:193px;width:106px;height:19px;background:#ff8a8a;"></div>
<div class="b" style="left:188px;top:193px;width:1px;height:19px;background:#c4c4c4;"></div>
<div class="b" style="left:284px;top:193px;width:1px;height:19px;background:#c4c4c4;"></div>
<div class="b" style="left:359px;top:193px;width:1px;height:19px;background:#c4c4c4;"></div>
<div class="b" style="left:423px;top:193px;width:1px;height:19px;background:#c4c4c4;"></div>
<div class="b" style="left:530px;top:193px;width:1px;height:19px;background:#c4c4c4;"></div>
<div class="b" style="left:637px;top:193px;width:1px;height:19px;background:#c4c4c4;"></div>
<div class="b" style="left:744px;top:193px;width:1px;height:19px;background:#c4c4c4;"></div>
<div class="b" style="left:851px;top:193px;width:1px;height:19px;background:#c4c4c4;"></div>
<div class="b" style="left:991px;top:193px;width:1px;height:19px;background:#c4c4c4;"></div>
<div class="b" style="left:1098px;top:193px;width:1px;height:19px;background:#c4c4c4;"></div>
<div class="b" style="left:1205px;top:193px;width:1px;height:19px;background:#c4c4c4;"></div>
<svg class="s" style="left:54px;top:195px" width="11" height="15" viewBox="0 0 11 15"><rect x="0.5" y="0.5" width="10" height="14" rx="2" fill="#fff" stroke="#d42020" stroke-width="1.1"/><path d="M4 4.5H7M4 7.5H7" stroke="#d42020" stroke-width="1.1"/></svg>
<div class="t" style="left:70.90px;top:195.34px;font-size:12px;line-height:16px;color:#000;font-weight:normal;transform:scaleX(0.8969);transform-origin:0 0;">2026.01.08 14:00:59</div>
<div class="t" style="right:1085.25px;top:195.34px;font-size:12px;line-height:16px;color:#000;font-weight:normal;transform:scaleX(0.9800);transform-origin:100% 0;">xagusd</div>
<div class="t" style="right:1010.33px;top:195.34px;font-size:12px;line-height:16px;color:#000;font-weight:normal;transform:scaleX(0.8900);transform-origin:100% 0;">54601002953</div>
<div class="t" style="right:946.29px;top:195.34px;font-size:12px;line-height:16px;color:#000;font-weight:normal;transform:scaleX(0.9800);transform-origin:100% 0;">sell</div>
<div class="t" style="right:839.30px;top:195.34px;font-size:12px;line-height:16px;color:#000;font-weight:normal;transform:scaleX(0.8900);transform-origin:100% 0;">0.3</div>
<div class="t" style="right:732.32px;top:195.34px;font-size:12px;line-height:16px;color:#000;font-weight:normal;transform:scaleX(0.8900);transform-origin:100% 0;">75.100</div>
<div class="t" style="right:625.32px;top:195.34px;font-size:12px;line-height:16px;color:#000;font-weight:normal;transform:scaleX(0.8900);transform-origin:100% 0;">82.800</div>
<div class="t" style="right:518.32px;top:195.34px;font-size:12px;line-height:16px;color:#000;font-weight:normal;transform:scaleX(0.8900);transform-origin:100% 0;">59.700</div>
<div class="t" style="right:378.25px;top:195.34px;font-size:12px;line-height:16px;color:#000;font-weight:normal;transform:scaleX(0.8948);transform-origin:100% 0;">2026.01.12 02:39:00</div>
<div class="t" style="right:271.32px;top:195.34px;font-size:12px;line-height:16px;color:#000;font-weight:normal;transform:scaleX(0.8900);transform-origin:100% 0;">82.800</div>
<div class="t" style="right:164.34px;top:195.34px;font-size:12px;line-height:16px;color:#0000ff;font-weight:normal;transform:scaleX(0.8900);transform-origin:100% 0;">0.60</div>
<div class="t" style="right:20.33px;top:195.34px;font-size:12px;line-height:16px;color:#ff0000;font-weight:normal;transform:scaleX(0.9174);transform-origin:100% 0;">-11 550.00</div>
<div class="b" style="left:50px;top:213px;width:1299px;height:19px;background:#fff;"></div>
<div class="b" style="left:50px;top:232px;width:1299px;height:1px;background:#bcbcbc;"></div>
<div class="b" style="left:638px;top:213px;width:106px;height:19px;background:#ff8a8a;"></div>
<div class="b" style="left:188px;top:213px;width:1px;height:19px;background:#c4c4c4;"></div>
<div class="b" style="left:284px;top:213px;width:1px;height:19px;background:#c4c4c4;"></div>
<div class="b" style="left:359px;top:213px;width:1px;height:19px;background:#c4c4c4;"></div>
<div class="b" style="left:423px;top:213px;width:1px;height:19px;background:#c4c4c4;"></div>
<div class="b" style="left:530px;top:213px;width:1px;height:19px;background:#c4c4c4;"></div>
<div class="b" style="left:637px;top:213px;width:1px;height:19px;background:#c4c4c4;"></div>
<div class="b" style="left:744px;top:213px;width:1px;height:19px;background:#c4c4c4;"></div>
<div class="b" style="left:851px;top:213px;width:1px;height:19px;background:#c4c4c4;"></div>
<div class="b" style="left:991px;top:213px;width:1px;height:19px;background:#c4c4c4;"></div>
<div class="b" style="left:1098px;top:213px;width:1px;height:19px;background:#c4c4c4;"></div>
<div class="b" style="left:1205px;top:213px;width:1px;height:19px;background:#c4c4c4;"></div>
<svg class="s" style="left:54px;top:215px" width="11" height="15" viewBox="0 0 11 15"><rect x="0.5" y="0.5" width="10" height="14" rx="2" fill="#fff" stroke="#d42020" stroke-width="1.1"/><path d="M4 4.5H7M4 7.5H7" stroke="#d42020" stroke-width="1.1"/></svg>
<div class="t" style="left:70.90px;top:215.34px;font-size:12px;line-height:16px;color:#000;font-weight:normal;transform:scaleX(0.8969);transform-origin:0 0;">2026.01.08 14:15:52</div>
<div class="t" style="right:1085.25px;top:215.34px;font-size:12px;line-height:16px;color:#000;font-weight:normal;transform:scaleX(0.9800);transform-origin:100% 0;">xauusd</div>
<div class="t" style="right:1010.33px;top:215.34px;font-size:12px;line-height:16px;color:#000;font-weight:normal;transform:scaleX(0.8900);transform-origin:100% 0;">54600909099</div>
<div class="t" style="right:946.29px;top:215.34px;font-size:12px;line-height:16px;color:#000;font-weight:normal;transform:scaleX(0.9800);transform-origin:100% 0;">sell</div>
<div class="t" style="right:839.30px;top:215.34px;font-size:12px;line-height:16px;color:#000;font-weight:normal;transform:scaleX(0.8900);transform-origin:100% 0;">0.3</div>
<div class="t" style="right:732.25px;top:215.34px;font-size:12px;line-height:16px;color:#000;font-weight:normal;transform:scaleX(0.8900);transform-origin:100% 0;">4410.00</div>
<div class="t" style="right:625.25px;top:215.34px;font-size:12px;line-height:16px;color:#000;font-weight:normal;transform:scaleX(0.8900);transform-origin:100% 0;">4510.00</div>
<div class="t" style="right:518.25px;top:215.34px;font-size:12px;line-height:16px;color:#000;font-weight:normal;transform:scaleX(0.8900);transform-origin:100% 0;">4210.00</div>
<div class="t" style="right:378.25px;top:215.34px;font-size:12px;line-height:16px;color:#000;font-weight:normal;transform:scaleX(0.8948);transform-origin:100% 0;">2026.01.09 17:24:10</div>
<div class="t" style="right:271.25px;top:215.34px;font-size:12px;line-height:16px;color:#000;font-weight:normal;transform:scaleX(0.8900);transform-origin:100% 0;">4510.00</div>
<div class="t" style="right:164.31px;top:215.34px;font-size:12px;line-height:16px;color:#ff0000;font-weight:normal;transform:scaleX(0.9280);transform-origin:100% 0;">-1.38</div>
<div class="t" style="right:20.35px;top:215.34px;font-size:12px;line-height:16px;color:#ff0000;font-weight:normal;transform:scaleX(0.9210);transform-origin:100% 0;">-3 000.00</div>
<div class="b" style="left:50px;top:233px;width:1299px;height:19px;background:#e6e6e6;"></div>
<div class="b" style="left:50px;top:252px;width:1299px;height:1px;background:#bcbcbc;"></div>
<div class="b" style="left:745px;top:233px;width:106px;height:19px;background:#40e840;"></div>
<div class="b" style="left:188px;top:233px;width:1px;height:19px;background:#c4c4c4;"></div>
<div class="b" style="left:284px;top:233px;width:1px;height:19px;background:#c4c4c4;"></div>
<div class="b" style="left:359px;top:233px;width:1px;height:19px;background:#c4c4c4;"></div>
<div class="b" style="left:423px;top:233px;width:1px;height:19px;background:#c4c4c4;"></div>
<div class="b" style="left:530px;top:233px;width:1px;height:19px;background:#c4c4c4;"></div>
<div class="b" style="left:637px;top:233px;width:1px;height:19px;background:#c4c4c4;"></div>
<div class="b" style="left:744px;top:233px;width:1px;height:19px;background:#c4c4c4;"></div>
<div class="b" style="left:851px;top:233px;width:1px;height:19px;background:#c4c4c4;"></div>
<div class="b" style="left:991px;top:233px;width:1px;height:19px;background:#c4c4c4;"></div>
<div class="b" style="left:1098px;top:233px;width:1px;height:19px;background:#c4c4c4;"></div>
<div class="b" style="left:1205px;top:233px;width:1px;height:19px;background:#c4c4c4;"></div>
<svg class="s" style="left:54px;top:235px" width="11" height="15" viewBox="0 0 11 15"><rect x="0.5" y="0.5" width="10" height="14" rx="2" fill="#fff" stroke="#0d3f8f" stroke-width="1.1"/><path d="M4 4.5H7M4 7.5H7" stroke="#0d3f8f" stroke-width="1.1"/></svg>
<div class="t" style="left:70.90px;top:235.34px;font-size:12px;line-height:16px;color:#000;font-weight:normal;transform:scaleX(0.8969);transform-origin:0 0;">2026.01.09 17:24:10</div>
<div class="t" style="right:1085.25px;top:235.34px;font-size:12px;line-height:16px;color:#000;font-weight:normal;transform:scaleX(0.9800);transform-origin:100% 0;">xauusd</div>
<div class="t" style="right:1010.33px;top:235.34px;font-size:12px;line-height:16px;color:#000;font-weight:normal;transform:scaleX(0.8900);transform-origin:100% 0;">54616231214</div>
<div class="t" style="right:946.27px;top:235.34px;font-size:12px;line-height:16px;color:#000;font-weight:normal;transform:scaleX(0.9800);transform-origin:100% 0;">buy</div>
<div class="t" style="right:839.30px;top:235.34px;font-size:12px;line-height:16px;color:#000;font-weight:normal;transform:scaleX(0.8900);transform-origin:100% 0;">0.3</div>
<div class="t" style="right:732.25px;top:235.34px;font-size:12px;line-height:16px;color:#000;font-weight:normal;transform:scaleX(0.8900);transform-origin:100% 0;">4510.00</div>
<div class="t" style="right:625.25px;top:235.34px;font-size:12px;line-height:16px;color:#000;font-weight:normal;transform:scaleX(0.8900);transform-origin:100% 0;">4400.00</div>
<div class="t" style="right:518.25px;top:235.34px;font-size:12px;line-height:16px;color:#000;font-weight:normal;transform:scaleX(0.8900);transform-origin:100% 0;">4620.00</div>
<div class="t" style="right:378.25px;top:235.34px;font-size:12px;line-height:16px;color:#000;font-weight:normal;transform:scaleX(0.8948);transform-origin:100% 0;">2026.01.12 15:54:49</div>
<div class="t" style="right:271.25px;top:235.34px;font-size:12px;line-height:16px;color:#000;font-weight:normal;transform:scaleX(0.8900);transform-origin:100% 0;">4620.00</div>
<div class="t" style="right:164.31px;top:235.34px;font-size:12px;line-height:16px;color:#ff0000;font-weight:normal;transform:scaleX(0.9280);transform-origin:100% 0;">-3.78</div>
<div class="t" style="right:20.28px;top:235.34px;font-size:12px;line-height:16px;color:#0000ff;font-weight:normal;transform:scaleX(0.9014);transform-origin:100% 0;">3 300.00</div>
<div class="b" style="left:50px;top:253px;width:1299px;height:19px;background:#fff;"></div>
<div class="b" style="left:50px;top:272px;width:1299px;height:1px;background:#bcbcbc;"></div>
<div class="b" style="left:745px;top:253px;width:106px;height:19px;background:#40e840;"></div>
<div class="b" style="left:188px;top:253px;width:1px;height:19px;background:#c4c4c4;"></div>
<div class="b" style="left:284px;top:253px;width:1px;height:19px;background:#c4c4c4;"></div>
<div class="b" style="left:359px;top:253px;width:1px;height:19px;background:#c4c4c4;"></div>
<div class="b" style="left:423px;top:253px;width:1px;height:19px;background:#c4c4c4;"></div>
<div class="b" style="left:530px;top:253px;width:1px;height:19px;background:#c4c4c4;"></div>
<div class="b" style="left:637px;top:253px;width:1px;height:19px;background:#c4c4c4;"></div>
<div class="b" style="left:744px;top:253px;width:1px;height:19px;background:#c4c4c4;"></div>
<div class="b" style="left:851px;top:253px;width:1px;height:19px;background:#c4c4c4;"></div>
<div class="b" style="left:991px;top:253px;width:1px;height:19px;background:#c4c4c4;"></div>
<div class="b" style="left:1098px;top:253px;width:1px;height:19px;background:#c4c4c4;"></div>
<div class="b" style="left:1205px;top:253px;width:1px;height:19px;background:#c4c4c4;"></div>
<svg class="s" style="left:54px;top:255px" width="11" height="15" viewBox="0 0 11 15"><rect x="0.5" y="0.5" width="10" height="14" rx="2" fill="#fff" stroke="#0d3f8f" stroke-width="1.1"/><path d="M4 4.5H7M4 7.5H7" stroke="#0d3f8f" stroke-width="1.1"/></svg>
<div class="t" style="left:70.90px;top:255.34px;font-size:12px;line-height:16px;color:#000;font-weight:normal;transform:scaleX(0.8969);transform-origin:0 0;">2026.01.12 15:03:10</div>
<div class="t" style="right:1085.25px;top:255.34px;font-size:12px;line-height:16px;color:#000;font-weight:normal;transform:scaleX(0.9800);transform-origin:100% 0;">xagusd</div>
<div class="t" style="right:1010.33px;top:255.34px;font-size:12px;line-height:16px;color:#000;font-weight:normal;transform:scaleX(0.8900);transform-origin:100% 0;">54634957962</div>
<div class="t" style="right:946.27px;top:255.34px;font-size:12px;line-height:16px;color:#000;font-weight:normal;transform:scaleX(0.9800);transform-origin:100% 0;">buy</div>
<div class="t" style="right:839.30px;top:255.34px;font-size:12px;line-height:16px;color:#000;font-weight:normal;transform:scaleX(0.8900);transform-origin:100% 0;">0.3</div>
<div class="t" style="right:732.32px;top:255.34px;font-size:12px;line-height:16px;color:#000;font-weight:normal;transform:scaleX(0.8900);transform-origin:100% 0;">84.650</div>
<div class="t" style="right:625.32px;top:255.34px;font-size:12px;line-height:16px;color:#000;font-weight:normal;transform:scaleX(0.8900);transform-origin:100% 0;">75.450</div>
<div class="t" style="right:518.32px;top:255.34px;font-size:12px;line-height:16px;color:#000;font-weight:normal;transform:scaleX(0.8900);transform-origin:100% 0;">93.850</div>
<div class="t" style="right:378.25px;top:255.34px;font-size:12px;line-height:16px;color:#000;font-weight:normal;transform:scaleX(0.8948);transform-origin:100% 0;">2026.01.19 01:32:23</div>
<div class="t" style="right:271.32px;top:255.34px;font-size:12px;line-height:16px;color:#000;font-weight:normal;transform:scaleX(0.8900);transform-origin:100% 0;">93.850</div>
<div class="t" style="right:164.35px;top:255.34px;font-size:12px;line-height:16px;color:#ff0000;font-weight:normal;transform:scaleX(0.9205);transform-origin:100% 0;">-24.15</div>
<div class="t" style="right:20.32px;top:255.34px;font-size:12px;line-height:16px;color:#0000ff;font-weight:normal;transform:scaleX(0.9000);transform-origin:100% 0;">13 800.00</div>
<div class="b" style="left:50px;top:273px;width:1299px;height:19px;background:#e6e6e6;"></div>
<div class="b" style="left:50px;top:292px;width:1299px;height:1px;background:#bcbcbc;"></div>
<div class="b" style="left:745px;top:273px;width:106px;height:19px;background:#40e840;"></div>
<div class="b" style="left:188px;top:273px;width:1px;height:19px;background:#c4c4c4;"></div>
<div class="b" style="left:284px;top:273px;width:1px;height:19px;background:#c4c4c4;"></div>
<div class="b" style="left:359px;top:273px;width:1px;height:19px;background:#c4c4c4;"></div>
<div class="b" style="left:423px;top:273px;width:1px;height:19px;background:#c4c4c4;"></div>
<div class="b" style="left:530px;top:273px;width:1px;height:19px;background:#c4c4c4;"></div>
<div class="b" style="left:637px;top:273px;width:1px;height:19px;background:#c4c4c4;"></div>
<div class="b" style="left:744px;top:273px;width:1px;height:19px;background:#c4c4c4;"></div>
<div class="b" style="left:851px;top:273px;width:1px;height:19px;background:#c4c4c4;"></div>
<div class="b" style="left:991px;top:273px;width:1px;height:19px;background:#c4c4c4;"></div>
<div class="b" style="left:1098px;top:273px;width:1px;height:19px;background:#c4c4c4;"></div>
<div class="b" style="left:1205px;top:273px;width:1px;height:19px;background:#c4c4c4;"></div>
<svg class="s" style="left:54px;top:275px" width="11" height="15" viewBox="0 0 11 15"><rect x="0.5" y="0.5" width="10" height="14" rx="2" fill="#fff" stroke="#0d3f8f" stroke-width="1.1"/><path d="M4 4.5H7M4 7.5H7" stroke="#0d3f8f" stroke-width="1.1"/></svg>
<div class="t" style="left:70.90px;top:275.34px;font-size:12px;line-height:16px;color:#000;font-weight:normal;transform:scaleX(0.8969);transform-origin:0 0;">2026.01.12 15:54:49</div>
<div class="t" style="right:1085.25px;top:275.34px;font-size:12px;line-height:16px;color:#000;font-weight:normal;transform:scaleX(0.9800);transform-origin:100% 0;">xauusd</div>
<div class="t" style="right:1010.33px;top:275.34px;font-size:12px;line-height:16px;color:#000;font-weight:normal;transform:scaleX(0.8900);transform-origin:100% 0;">54634841663</div>
<div class="t" style="right:946.27px;top:275.34px;font-size:12px;line-height:16px;color:#000;font-weight:normal;transform:scaleX(0.9800);transform-origin:100% 0;">buy</div>
<div class="t" style="right:839.30px;top:275.34px;font-size:12px;line-height:16px;color:#000;font-weight:normal;transform:scaleX(0.8900);transform-origin:100% 0;">0.3</div>
<div class="t" style="right:732.25px;top:275.34px;font-size:12px;line-height:16px;color:#000;font-weight:normal;transform:scaleX(0.8900);transform-origin:100% 0;">4620.00</div>
<div class="t" style="right:625.25px;top:275.34px;font-size:12px;line-height:16px;color:#000;font-weight:normal;transform:scaleX(0.8900);transform-origin:100% 0;">4440.00</div>
<div class="t" style="right:518.25px;top:275.34px;font-size:12px;line-height:16px;color:#000;font-weight:normal;transform:scaleX(0.8900);transform-origin:100% 0;">4800.00</div>
<div class="t" style="right:378.25px;top:275.34px;font-size:12px;line-height:16px;color:#000;font-weight:normal;transform:scaleX(0.8948);transform-origin:100% 0;">2026.01.21 03:08:55</div>
<div class="t" style="right:271.25px;top:275.34px;font-size:12px;line-height:16px;color:#000;font-weight:normal;transform:scaleX(0.8900);transform-origin:100% 0;">4800.00</div>
<div class="t" style="right:164.35px;top:275.34px;font-size:12px;line-height:16px;color:#ff0000;font-weight:normal;transform:scaleX(0.9205);transform-origin:100% 0;">-34.02</div>
<div class="t" style="right:20.28px;top:275.34px;font-size:12px;line-height:16px;color:#0000ff;font-weight:normal;transform:scaleX(0.9014);transform-origin:100% 0;">5 400.00</div>
<div class="b" style="left:50px;top:293px;width:1299px;height:19px;background:#fff;"></div>
<div class="b" style="left:50px;top:312px;width:1299px;height:1px;background:#bcbcbc;"></div>
<div class="b" style="left:638px;top:293px;width:106px;height:19px;background:#ff8a8a;"></div>
<div class="b" style="left:188px;top:293px;width:1px;height:19px;background:#c4c4c4;"></div>
<div class="b" style="left:284px;top:293px;width:1px;height:19px;background:#c4c4c4;"></div>
<div class="b" style="left:359px;top:293px;width:1px;height:19px;background:#c4c4c4;"></div>
<div class="b" style="left:423px;top:293px;width:1px;height:19px;background:#c4c4c4;"></div>
<div class="b" style="left:530px;top:293px;width:1px;height:19px;background:#c4c4c4;"></div>
<div class="b" style="left:637px;top:293px;width:1px;height:19px;background:#c4c4c4;"></div>
<div class="b" style="left:744px;top:293px;width:1px;height:19px;background:#c4c4c4;"></div>
<div class="b" style="left:851px;top:293px;width:1px;height:19px;background:#c4c4c4;"></div>
<div class="b" style="left:991px;top:293px;width:1px;height:19px;background:#c4c4c4;"></div>
<div class="b" style="left:1098px;top:293px;width:1px;height:19px;background:#c4c4c4;"></div>
<div class="b" style="left:1205px;top:293px;width:1px;height:19px;background:#c4c4c4;"></div>
<svg class="s" style="left:54px;top:295px" width="11" height="15" viewBox="0 0 11 15"><rect x="0.5" y="0.5" width="10" height="14" rx="2" fill="#fff" stroke="#d42020" stroke-width="1.1"/><path d="M4 4.5H7M4 7.5H7" stroke="#d42020" stroke-width="1.1"/></svg>
<div class="t" style="left:70.90px;top:295.34px;font-size:12px;line-height:16px;color:#000;font-weight:normal;transform:scaleX(0.8969);transform-origin:0 0;">2026.01.16 17:31:46</div>
<div class="t" style="right:1085.25px;top:295.34px;font-size:12px;line-height:16px;color:#000;font-weight:normal;transform:scaleX(0.9800);transform-origin:100% 0;">xauusd</div>
<div class="t" style="right:1010.33px;top:295.34px;font-size:12px;line-height:16px;color:#000;font-weight:normal;transform:scaleX(0.8900);transform-origin:100% 0;">54689782040</div>
<div class="t" style="right:946.29px;top:295.34px;font-size:12px;line-height:16px;color:#000;font-weight:normal;transform:scaleX(0.9800);transform-origin:100% 0;">sell</div>
<div class="t" style="right:839.30px;top:295.34px;font-size:12px;line-height:16px;color:#000;font-weight:normal;transform:scaleX(0.8900);transform-origin:100% 0;">0.3</div>
<div class="t" style="right:732.25px;top:295.34px;font-size:12px;line-height:16px;color:#000;font-weight:normal;transform:scaleX(0.8900);transform-origin:100% 0;">4560.00</div>
<div class="t" style="right:625.25px;top:295.34px;font-size:12px;line-height:16px;color:#000;font-weight:normal;transform:scaleX(0.8900);transform-origin:100% 0;">4650.00</div>
<div class="t" style="right:518.25px;top:295.34px;font-size:12px;line-height:16px;color:#000;font-weight:normal;transform:scaleX(0.8900);transform-origin:100% 0;">4470.00</div>
<div class="t" style="right:378.25px;top:295.34px;font-size:12px;line-height:16px;color:#000;font-weight:normal;transform:scaleX(0.8948);transform-origin:100% 0;">2026.01.19 01:03:53</div>
<div class="t" style="right:271.25px;top:295.34px;font-size:12px;line-height:16px;color:#000;font-weight:normal;transform:scaleX(0.8900);transform-origin:100% 0;">4650.00</div>
<div class="t" style="right:164.31px;top:295.34px;font-size:12px;line-height:16px;color:#ff0000;font-weight:normal;transform:scaleX(0.9280);transform-origin:100% 0;">-1.38</div>
<div class="t" style="right:20.35px;top:295.34px;font-size:12px;line-height:16px;color:#ff0000;font-weight:normal;transform:scaleX(0.9210);transform-origin:100% 0;">-2 700.00</div>
<div class="b" style="left:50px;top:313px;width:1299px;height:19px;background:#e6e6e6;"></div>
<div class="b" style="left:50px;top:332px;width:1299px;height:1px;background:#bcbcbc;"></div>
<div class="b" style="left:745px;top:313px;width:106px;height:19px;background:#40e840;"></div>
<div class="b" style="left:188px;top:313px;width:1px;height:19px;background:#c4c4c4;"></div>
<div class="b" style="left:284px;top:313px;width:1px;height:19px;background:#c4c4c4;"></div>
<div class="b" style="left:359px;top:313px;width:1px;height:19px;background:#c4c4c4;"></div>
<div class="b" style="left:423px;top:313px;width:1px;height:19px;background:#c4c4c4;"></div>
<div class="b" style="left:530px;top:313px;width:1px;height:19px;background:#c4c4c4;"></div>
<div class="b" style="left:637px;top:313px;width:1px;height:19px;background:#c4c4c4;"></div>
<div class="b" style="left:744px;top:313px;width:1px;height:19px;background:#c4c4c4;"></div>
<div class="b" style="left:851px;top:313px;width:1px;height:19px;background:#c4c4c4;"></div>
<div class="b" style="left:991px;top:313px;width:1px;height:19px;background:#c4c4c4;"></div>
<div class="b" style="left:1098px;top:313px;width:1px;height:19px;background:#c4c4c4;"></div>
<div class="b" style="left:1205px;top:313px;width:1px;height:19px;background:#c4c4c4;"></div>
<svg class="s" style="left:54px;top:315px" width="11" height="15" viewBox="0 0 11 15"><rect x="0.5" y="0.5" width="10" height="14" rx="2" fill="#fff" stroke="#0d3f8f" stroke-width="1.1"/><path d="M4 4.5H7M4 7.5H7" stroke="#0d3f8f" stroke-width="1.1"/></svg>
<div class="t" style="left:70.90px;top:315.34px;font-size:12px;line-height:16px;color:#000;font-weight:normal;transform:scaleX(0.8969);transform-origin:0 0;">2026.01.19 01:31:57</div>
<div class="t" style="right:1085.25px;top:315.34px;font-size:12px;line-height:16px;color:#000;font-weight:normal;transform:scaleX(0.9800);transform-origin:100% 0;">xagusd</div>
<div class="t" style="right:1010.33px;top:315.34px;font-size:12px;line-height:16px;color:#000;font-weight:normal;transform:scaleX(0.8900);transform-origin:100% 0;">54689834205</div>
<div class="t" style="right:946.27px;top:315.34px;font-size:12px;line-height:16px;color:#000;font-weight:normal;transform:scaleX(0.9800);transform-origin:100% 0;">buy</div>
<div class="t" style="right:839.30px;top:315.34px;font-size:12px;line-height:16px;color:#000;font-weight:normal;transform:scaleX(0.8900);transform-origin:100% 0;">0.3</div>
<div class="t" style="right:732.32px;top:315.34px;font-size:12px;line-height:16px;color:#000;font-weight:normal;transform:scaleX(0.8900);transform-origin:100% 0;">93.850</div>
<div class="t" style="right:625.32px;top:315.34px;font-size:12px;line-height:16px;color:#000;font-weight:normal;transform:scaleX(0.8900);transform-origin:100% 0;">85.850</div>
<div class="t" style="right:518.25px;top:315.34px;font-size:12px;line-height:16px;color:#000;font-weight:normal;transform:scaleX(0.8900);transform-origin:100% 0;">101.850</div>
<div class="t" style="right:378.25px;top:315.34px;font-size:12px;line-height:16px;color:#000;font-weight:normal;transform:scaleX(0.8948);transform-origin:100% 0;">2026.01.23 21:52:50</div>
<div class="t" style="right:271.25px;top:315.34px;font-size:12px;line-height:16px;color:#000;font-weight:normal;transform:scaleX(0.8900);transform-origin:100% 0;">101.850</div>
<div class="t" style="right:164.35px;top:315.34px;font-size:12px;line-height:16px;color:#ff0000;font-weight:normal;transform:scaleX(0.9205);transform-origin:100% 0;">-20.70</div>
<div class="t" style="right:20.32px;top:315.34px;font-size:12px;line-height:16px;color:#0000ff;font-weight:normal;transform:scaleX(0.9000);transform-origin:100% 0;">12 000.00</div>
<div class="b" style="left:50px;top:333px;width:1299px;height:19px;background:#fff;"></div>
<div class="b" style="left:50px;top:352px;width:1299px;height:1px;background:#bcbcbc;"></div>
<div class="b" style="left:745px;top:333px;width:106px;height:19px;background:#40e840;"></div>
<div class="b" style="left:188px;top:333px;width:1px;height:19px;background:#c4c4c4;"></div>
<div class="b" style="left:284px;top:333px;width:1px;height:19px;background:#c4c4c4;"></div>
<div class="b" style="left:359px;top:333px;width:1px;height:19px;background:#c4c4c4;"></div>
<div class="b" style="left:423px;top:333px;width:1px;height:19px;background:#c4c4c4;"></div>
<div class="b" style="left:530px;top:333px;width:1px;height:19px;background:#c4c4c4;"></div>
<div class="b" style="left:637px;top:333px;width:1px;height:19px;background:#c4c4c4;"></div>
<div class="b" style="left:744px;top:333px;width:1px;height:19px;background:#c4c4c4;"></div>
<div class="b" style="left:851px;top:333px;width:1px;height:19px;background:#c4c4c4;"></div>
<div class="b" style="left:991px;top:333px;width:1px;height:19px;background:#c4c4c4;"></div>
<div class="b" style="left:1098px;top:333px;width:1px;height:19px;background:#c4c4c4;"></div>
<div class="b" style="left:1205px;top:333px;width:1px;height:19px;background:#c4c4c4;"></div>
<svg class="s" style="left:54px;top:335px" width="11" height="15" viewBox="0 0 11 15"><rect x="0.5" y="0.5" width="10" height="14" rx="2" fill="#fff" stroke="#0d3f8f" stroke-width="1.1"/><path d="M4 4.5H7M4 7.5H7" stroke="#0d3f8f" stroke-width="1.1"/></svg>
<div class="t" style="left:70.90px;top:335.34px;font-size:12px;line-height:16px;color:#000;font-weight:normal;transform:scaleX(0.8969);transform-origin:0 0;">2026.01.21 03:08:52</div>
<div class="t" style="right:1085.25px;top:335.34px;font-size:12px;line-height:16px;color:#000;font-weight:normal;transform:scaleX(0.9800);transform-origin:100% 0;">xauusd</div>
<div class="t" style="right:1010.33px;top:335.34px;font-size:12px;line-height:16px;color:#000;font-weight:normal;transform:scaleX(0.8900);transform-origin:100% 0;">54736557419</div>
<div class="t" style="right:946.27px;top:335.34px;font-size:12px;line-height:16px;color:#000;font-weight:normal;transform:scaleX(0.9800);transform-origin:100% 0;">buy</div>
<div class="t" style="right:839.30px;top:335.34px;font-size:12px;line-height:16px;color:#000;font-weight:normal;transform:scaleX(0.8900);transform-origin:100% 0;">0.3</div>
<div class="t" style="right:732.25px;top:335.34px;font-size:12px;line-height:16px;color:#000;font-weight:normal;transform:scaleX(0.8900);transform-origin:100% 0;">4800.00</div>
<div class="t" style="right:625.25px;top:335.34px;font-size:12px;line-height:16px;color:#000;font-weight:normal;transform:scaleX(0.8900);transform-origin:100% 0;">4610.00</div>
<div class="t" style="right:518.25px;top:335.34px;font-size:12px;line-height:16px;color:#000;font-weight:normal;transform:scaleX(0.8900);transform-origin:100% 0;">4990.00</div>
<div class="t" style="right:378.25px;top:335.34px;font-size:12px;line-height:16px;color:#000;font-weight:normal;transform:scaleX(0.8948);transform-origin:100% 0;">2026.01.23 23:58:35</div>
<div class="t" style="right:271.25px;top:335.34px;font-size:12px;line-height:16px;color:#000;font-weight:normal;transform:scaleX(0.8900);transform-origin:100% 0;">4990.00</div>
<div class="t" style="right:164.35px;top:335.34px;font-size:12px;line-height:16px;color:#ff0000;font-weight:normal;transform:scaleX(0.9205);transform-origin:100% 0;">-15.12</div>
<div class="t" style="right:20.28px;top:335.34px;font-size:12px;line-height:16px;color:#0000ff;font-weight:normal;transform:scaleX(0.9014);transform-origin:100% 0;">5 700.00</div>
<div class="b" style="left:50px;top:353px;width:1299px;height:19px;background:#e6e6e6;"></div>
<div class="b" style="left:50px;top:372px;width:1299px;height:1px;background:#bcbcbc;"></div>
<div class="b" style="left:638px;top:353px;width:106px;height:19px;background:#ff8a8a;"></div>
<div class="b" style="left:188px;top:353px;width:1px;height:19px;background:#c4c4c4;"></div>
<div class="b" style="left:284px;top:353px;width:1px;height:19px;background:#c4c4c4;"></div>
<div class="b" style="left:359px;top:353px;width:1px;height:19px;background:#c4c4c4;"></div>
<div class="b" style="left:423px;top:353px;width:1px;height:19px;background:#c4c4c4;"></div>
<div class="b" style="left:530px;top:353px;width:1px;height:19px;background:#c4c4c4;"></div>
<div class="b" style="left:637px;top:353px;width:1px;height:19px;background:#c4c4c4;"></div>
<div class="b" style="left:744px;top:353px;width:1px;height:19px;background:#c4c4c4;"></div>
<div class="b" style="left:851px;top:353px;width:1px;height:19px;background:#c4c4c4;"></div>
<div class="b" style="left:991px;top:353px;width:1px;height:19px;background:#c4c4c4;"></div>
<div class="b" style="left:1098px;top:353px;width:1px;height:19px;background:#c4c4c4;"></div>
<div class="b" style="left:1205px;top:353px;width:1px;height:19px;background:#c4c4c4;"></div>
<svg class="s" style="left:54px;top:355px" width="11" height="15" viewBox="0 0 11 15"><rect x="0.5" y="0.5" width="10" height="14" rx="2" fill="#fff" stroke="#d42020" stroke-width="1.1"/><path d="M4 4.5H7M4 7.5H7" stroke="#d42020" stroke-width="1.1"/></svg>
<div class="t" style="left:70.90px;top:355.34px;font-size:12px;line-height:16px;color:#000;font-weight:normal;transform:scaleX(0.9038);transform-origin:0 0;">2026.01.21 21:47:11</div>
<div class="t" style="right:1085.25px;top:355.34px;font-size:12px;line-height:16px;color:#000;font-weight:normal;transform:scaleX(0.9800);transform-origin:100% 0;">xagusd</div>
<div class="t" style="right:1010.33px;top:355.34px;font-size:12px;line-height:16px;color:#000;font-weight:normal;transform:scaleX(0.8900);transform-origin:100% 0;">54736762997</div>
<div class="t" style="right:946.29px;top:355.34px;font-size:12px;line-height:16px;color:#000;font-weight:normal;transform:scaleX(0.9800);transform-origin:100% 0;">sell</div>
<div class="t" style="right:839.30px;top:355.34px;font-size:12px;line-height:16px;color:#000;font-weight:normal;transform:scaleX(0.8900);transform-origin:100% 0;">0.3</div>
<div class="t" style="right:732.32px;top:355.34px;font-size:12px;line-height:16px;color:#000;font-weight:normal;transform:scaleX(0.8900);transform-origin:100% 0;">90.550</div>
<div class="t" style="right:625.32px;top:355.34px;font-size:12px;line-height:16px;color:#000;font-weight:normal;transform:scaleX(0.8900);transform-origin:100% 0;">95.550</div>
<div class="t" style="right:518.32px;top:355.34px;font-size:12px;line-height:16px;color:#000;font-weight:normal;transform:scaleX(0.8900);transform-origin:100% 0;">85.550</div>
<div class="t" style="right:378.25px;top:355.34px;font-size:12px;line-height:16px;color:#000;font-weight:normal;transform:scaleX(0.8948);transform-origin:100% 0;">2026.01.22 17:51:58</div>
<div class="t" style="right:271.32px;top:355.34px;font-size:12px;line-height:16px;color:#000;font-weight:normal;transform:scaleX(0.8900);transform-origin:100% 0;">95.550</div>
<div class="t" style="right:164.34px;top:355.34px;font-size:12px;line-height:16px;color:#0000ff;font-weight:normal;transform:scaleX(0.8900);transform-origin:100% 0;">0.90</div>
<div class="t" style="right:20.35px;top:355.34px;font-size:12px;line-height:16px;color:#ff0000;font-weight:normal;transform:scaleX(0.9210);transform-origin:100% 0;">-7 500.00</div>
<div class="b" style="left:50px;top:373px;width:1299px;height:19px;background:#fff;"></div>
<div class="b" style="left:50px;top:392px;width:1299px;height:1px;background:#bcbcbc;"></div>
<div class="b" style="left:745px;top:373px;width:106px;height:19px;background:#40e840;"></div>
<div class="b" style="left:188px;top:373px;width:1px;height:19px;background:#c4c4c4;"></div>
<div class="b" style="left:284px;top:373px;width:1px;height:19px;background:#c4c4c4;"></div>
<div class="b" style="left:359px;top:373px;width:1px;height:19px;background:#c4c4c4;"></div>
<div class="b" style="left:423px;top:373px;width:1px;height:19px;background:#c4c4c4;"></div>
<div class="b" style="left:530px;top:373px;width:1px;height:19px;background:#c4c4c4;"></div>
<div class="b" style="left:637px;top:373px;width:1px;height:19px;background:#c4c4c4;"></div>
<div class="b" style="left:744px;top:373px;width:1px;height:19px;background:#c4c4c4;"></div>
<div class="b" style="left:851px;top:373px;width:1px;height:19px;background:#c4c4c4;"></div>
<div class="b" style="left:991px;top:373px;width:1px;height:19px;background:#c4c4c4;"></div>
<div class="b" style="left:1098px;top:373px;width:1px;height:19px;background:#c4c4c4;"></div>
<div class="b" style="left:1205px;top:373px;width:1px;height:19px;background:#c4c4c4;"></div>
<svg class="s" style="left:54px;top:375px" width="11" height="15" viewBox="0 0 11 15"><rect x="0.5" y="0.5" width="10" height="14" rx="2" fill="#fff" stroke="#0d3f8f" stroke-width="1.1"/><path d="M4 4.5H7M4 7.5H7" stroke="#0d3f8f" stroke-width="1.1"/></svg>
<div class="t" style="left:70.90px;top:375.34px;font-size:12px;line-height:16px;color:#000;font-weight:normal;transform:scaleX(0.8969);transform-origin:0 0;">2026.01.22 18:50:34</div>
<div class="t" style="right:1085.25px;top:375.34px;font-size:12px;line-height:16px;color:#000;font-weight:normal;transform:scaleX(0.9800);transform-origin:100% 0;">xagusd</div>
<div class="t" style="right:1010.33px;top:375.34px;font-size:12px;line-height:16px;color:#000;font-weight:normal;transform:scaleX(0.8900);transform-origin:100% 0;">54776588095</div>
<div class="t" style="right:946.27px;top:375.34px;font-size:12px;line-height:16px;color:#000;font-weight:normal;transform:scaleX(0.9800);transform-origin:100% 0;">buy</div>
<div class="t" style="right:839.30px;top:375.34px;font-size:12px;line-height:16px;color:#000;font-weight:normal;transform:scaleX(0.8900);transform-origin:100% 0;">0.3</div>
<div class="t" style="right:732.32px;top:375.34px;font-size:12px;line-height:16px;color:#000;font-weight:normal;transform:scaleX(0.8900);transform-origin:100% 0;">95.900</div>
<div class="t" style="right:625.32px;top:375.34px;font-size:12px;line-height:16px;color:#000;font-weight:normal;transform:scaleX(0.8900);transform-origin:100% 0;">90.300</div>
<div class="t" style="right:518.25px;top:375.34px;font-size:12px;line-height:16px;color:#000;font-weight:normal;transform:scaleX(0.8900);transform-origin:100% 0;">101.500</div>
<div class="t" style="right:378.25px;top:375.34px;font-size:12px;line-height:16px;color:#000;font-weight:normal;transform:scaleX(0.8948);transform-origin:100% 0;">2026.01.23 21:05:05</div>
<div class="t" style="right:271.25px;top:375.34px;font-size:12px;line-height:16px;color:#000;font-weight:normal;transform:scaleX(0.8900);transform-origin:100% 0;">101.500</div>
<div class="t" style="right:164.31px;top:375.34px;font-size:12px;line-height:16px;color:#ff0000;font-weight:normal;transform:scaleX(0.9280);transform-origin:100% 0;">-3.45</div>
<div class="t" style="right:20.28px;top:375.34px;font-size:12px;line-height:16px;color:#0000ff;font-weight:normal;transform:scaleX(0.9014);transform-origin:100% 0;">8 400.00</div>
<div class="b" style="left:50px;top:393px;width:1299px;height:19px;background:#e6e6e6;"></div>
<div class="b" style="left:50px;top:412px;width:1299px;height:1px;background:#bcbcbc;"></div>
<div class="b" style="left:745px;top:393px;width:106px;height:19px;background:#40e840;"></div>
<div class="b" style="left:188px;top:393px;width:1px;height:19px;background:#c4c4c4;"></div>
<div class="b" style="left:284px;top:393px;width:1px;height:19px;background:#c4c4c4;"></div>
<div class="b" style="left:359px;top:393px;width:1px;height:19px;background:#c4c4c4;"></div>
<div class="b" style="left:423px;top:393px;width:1px;height:19px;background:#c4c4c4;"></div>
<div class="b" style="left:530px;top:393px;width:1px;height:19px;background:#c4c4c4;"></div>
<div class="b" style="left:637px;top:393px;width:1px;height:19px;background:#c4c4c4;"></div>
<div class="b" style="left:744px;top:393px;width:1px;height:19px;background:#c4c4c4;"></div>
<div class="b" style="left:851px;top:393px;width:1px;height:19px;background:#c4c4c4;"></div>
<div class="b" style="left:991px;top:393px;width:1px;height:19px;background:#c4c4c4;"></div>
<div class="b" style="left:1098px;top:393px;width:1px;height:19px;background:#c4c4c4;"></div>
<div class="b" style="left:1205px;top:393px;width:1px;height:19px;background:#c4c4c4;"></div>
<svg class="s" style="left:54px;top:395px" width="11" height="15" viewBox="0 0 11 15"><rect x="0.5" y="0.5" width="10" height="14" rx="2" fill="#fff" stroke="#0d3f8f" stroke-width="1.1"/><path d="M4 4.5H7M4 7.5H7" stroke="#0d3f8f" stroke-width="1.1"/></svg>
<div class="t" style="left:70.90px;top:395.34px;font-size:12px;line-height:16px;color:#000;font-weight:normal;transform:scaleX(0.8969);transform-origin:0 0;">2026.01.23 21:52:50</div>
<div class="t" style="right:1085.25px;top:395.34px;font-size:12px;line-height:16px;color:#000;font-weight:normal;transform:scaleX(0.9800);transform-origin:100% 0;">xagusd</div>
<div class="t" style="right:1010.33px;top:395.34px;font-size:12px;line-height:16px;color:#000;font-weight:normal;transform:scaleX(0.8900);transform-origin:100% 0;">54794282100</div>
<div class="t" style="right:946.27px;top:395.34px;font-size:12px;line-height:16px;color:#000;font-weight:normal;transform:scaleX(0.9800);transform-origin:100% 0;">buy</div>
<div class="t" style="right:839.30px;top:395.34px;font-size:12px;line-height:16px;color:#000;font-weight:normal;transform:scaleX(0.8900);transform-origin:100% 0;">0.3</div>
<div class="t" style="right:732.25px;top:395.34px;font-size:12px;line-height:16px;color:#000;font-weight:normal;transform:scaleX(0.8900);transform-origin:100% 0;">101.850</div>
<div class="t" style="right:625.32px;top:395.34px;font-size:12px;line-height:16px;color:#000;font-weight:normal;transform:scaleX(0.8900);transform-origin:100% 0;">90.300</div>
<div class="t" style="right:518.30px;top:395.34px;font-size:12px;line-height:16px;color:#000;font-weight:normal;transform:scaleX(0.8900);transform-origin:100% 0;">113.400</div>
<div class="t" style="right:378.25px;top:395.34px;font-size:12px;line-height:16px;color:#000;font-weight:normal;transform:scaleX(0.8948);transform-origin:100% 0;">2026.01.26 18:15:32</div>
<div class="t" style="right:271.30px;top:395.34px;font-size:12px;line-height:16px;color:#000;font-weight:normal;transform:scaleX(0.8900);transform-origin:100% 0;">113.400</div>
<div class="t" style="right:164.31px;top:395.34px;font-size:12px;line-height:16px;color:#ff0000;font-weight:normal;transform:scaleX(0.9280);transform-origin:100% 0;">-3.45</div>
<div class="t" style="right:20.32px;top:395.34px;font-size:12px;line-height:16px;color:#0000ff;font-weight:normal;transform:scaleX(0.9000);transform-origin:100% 0;">17 325.00</div>
<div class="b" style="left:50px;top:413px;width:1299px;height:19px;background:#fff;"></div>
<div class="b" style="left:50px;top:432px;width:1299px;height:1px;background:#bcbcbc;"></div>
<div class="b" style="left:745px;top:413px;width:106px;height:19px;background:#40e840;"></div>
<div class="b" style="left:188px;top:413px;width:1px;height:19px;background:#c4c4c4;"></div>
<div class="b" style="left:284px;top:413px;width:1px;height:19px;background:#c4c4c4;"></div>
<div class="b" style="left:359px;top:413px;width:1px;height:19px;background:#c4c4c4;"></div>
<div class="b" style="left:423px;top:413px;width:1px;height:19px;background:#c4c4c4;"></div>
<div class="b" style="left:530px;top:413px;width:1px;height:19px;background:#c4c4c4;"></div>
<div class="b" style="left:637px;top:413px;width:1px;height:19px;background:#c4c4c4;"></div>
<div class="b" style="left:744px;top:413px;width:1px;height:19px;background:#c4c4c4;"></div>
<div class="b" style="left:851px;top:413px;width:1px;height:19px;background:#c4c4c4;"></div>
<div class="b" style="left:991px;top:413px;width:1px;height:19px;background:#c4c4c4;"></div>
<div class="b" style="left:1098px;top:413px;width:1px;height:19px;background:#c4c4c4;"></div>
<div class="b" style="left:1205px;top:413px;width:1px;height:19px;background:#c4c4c4;"></div>
<svg class="s" style="left:54px;top:415px" width="11" height="15" viewBox="0 0 11 15"><rect x="0.5" y="0.5" width="10" height="14" rx="2" fill="#fff" stroke="#0d3f8f" stroke-width="1.1"/><path d="M4 4.5H7M4 7.5H7" stroke="#0d3f8f" stroke-width="1.1"/></svg>
<div class="t" style="left:70.90px;top:415.34px;font-size:12px;line-height:16px;color:#000;font-weight:normal;transform:scaleX(0.8969);transform-origin:0 0;">2026.01.23 23:58:27</div>
<div class="t" style="right:1085.25px;top:415.34px;font-size:12px;line-height:16px;color:#000;font-weight:normal;transform:scaleX(0.9800);transform-origin:100% 0;">xauusd</div>
<div class="t" style="right:1010.33px;top:415.34px;font-size:12px;line-height:16px;color:#000;font-weight:normal;transform:scaleX(0.8900);transform-origin:100% 0;">54757416228</div>
<div class="t" style="right:946.27px;top:415.34px;font-size:12px;line-height:16px;color:#000;font-weight:normal;transform:scaleX(0.9800);transform-origin:100% 0;">buy</div>
<div class="t" style="right:839.30px;top:415.34px;font-size:12px;line-height:16px;color:#000;font-weight:normal;transform:scaleX(0.8900);transform-origin:100% 0;">0.3</div>
<div class="t" style="right:732.25px;top:415.34px;font-size:12px;line-height:16px;color:#000;font-weight:normal;transform:scaleX(0.8900);transform-origin:100% 0;">4990.00</div>
<div class="t" style="right:625.25px;top:415.34px;font-size:12px;line-height:16px;color:#000;font-weight:normal;transform:scaleX(0.8900);transform-origin:100% 0;">4770.00</div>
<div class="t" style="right:518.25px;top:415.34px;font-size:12px;line-height:16px;color:#000;font-weight:normal;transform:scaleX(0.8900);transform-origin:100% 0;">5210.00</div>
<div class="t" style="right:378.25px;top:415.34px;font-size:12px;line-height:16px;color:#000;font-weight:normal;transform:scaleX(0.8948);transform-origin:100% 0;">2026.01.28 03:41:16</div>
<div class="t" style="right:271.25px;top:415.34px;font-size:12px;line-height:16px;color:#000;font-weight:normal;transform:scaleX(0.8900);transform-origin:100% 0;">5210.00</div>
<div class="t" style="right:164.29px;top:415.34px;font-size:12px;line-height:16px;color:#ff0000;font-weight:normal;transform:scaleX(0.9205);transform-origin:100% 0;">-11.34</div>
<div class="t" style="right:20.28px;top:415.34px;font-size:12px;line-height:16px;color:#0000ff;font-weight:normal;transform:scaleX(0.9014);transform-origin:100% 0;">6 600.00</div>
<div class="b" style="left:50px;top:433px;width:1299px;height:19px;background:#e6e6e6;"></div>
<div class="b" style="left:50px;top:452px;width:1299px;height:1px;background:#bcbcbc;"></div>
<div class="b" style="left:638px;top:433px;width:106px;height:19px;background:#ff8a8a;"></div>
<div class="b" style="left:188px;top:433px;width:1px;height:19px;background:#c4c4c4;"></div>
<div class="b" style="left:284px;top:433px;width:1px;height:19px;background:#c4c4c4;"></div>
<div class="b" style="left:359px;top:433px;width:1px;height:19px;background:#c4c4c4;"></div>
<div class="b" style="left:423px;top:433px;width:1px;height:19px;background:#c4c4c4;"></div>
<div class="b" style="left:530px;top:433px;width:1px;height:19px;background:#c4c4c4;"></div>
<div class="b" style="left:637px;top:433px;width:1px;height:19px;background:#c4c4c4;"></div>
<div class="b" style="left:744px;top:433px;width:1px;height:19px;background:#c4c4c4;"></div>
<div class="b" style="left:851px;top:433px;width:1px;height:19px;background:#c4c4c4;"></div>
<div class="b" style="left:991px;top:433px;width:1px;height:19px;background:#c4c4c4;"></div>
<div class="b" style="left:1098px;top:433px;width:1px;height:19px;background:#c4c4c4;"></div>
<div class="b" style="left:1205px;top:433px;width:1px;height:19px;background:#c4c4c4;"></div>
<svg class="s" style="left:54px;top:435px" width="11" height="15" viewBox="0 0 11 15"><rect x="0.5" y="0.5" width="10" height="14" rx="2" fill="#fff" stroke="#0d3f8f" stroke-width="1.1"/><path d="M4 4.5H7M4 7.5H7" stroke="#0d3f8f" stroke-width="1.1"/></svg>
<div class="t" style="left:70.90px;top:435.34px;font-size:12px;line-height:16px;color:#000;font-weight:normal;transform:scaleX(0.8969);transform-origin:0 0;">2026.01.26 18:15:32</div>
<div class="t" style="right:1085.25px;top:435.34px;font-size:12px;line-height:16px;color:#000;font-weight:normal;transform:scaleX(0.9800);transform-origin:100% 0;">xagusd</div>
<div class="t" style="right:1010.33px;top:435.34px;font-size:12px;line-height:16px;color:#000;font-weight:normal;transform:scaleX(0.8900);transform-origin:100% 0;">54815256173</div>
<div class="t" style="right:946.27px;top:435.34px;font-size:12px;line-height:16px;color:#000;font-weight:normal;transform:scaleX(0.9800);transform-origin:100% 0;">buy</div>
<div class="t" style="right:839.30px;top:435.34px;font-size:12px;line-height:16px;color:#000;font-weight:normal;transform:scaleX(0.8900);transform-origin:100% 0;">0.3</div>
<div class="t" style="right:732.30px;top:435.34px;font-size:12px;line-height:16px;color:#000;font-weight:normal;transform:scaleX(0.8900);transform-origin:100% 0;">113.400</div>
<div class="t" style="right:625.32px;top:435.34px;font-size:12px;line-height:16px;color:#000;font-weight:normal;transform:scaleX(0.8900);transform-origin:100% 0;">96.100</div>
<div class="t" style="right:518.25px;top:435.34px;font-size:12px;line-height:16px;color:#000;font-weight:normal;transform:scaleX(0.8900);transform-origin:100% 0;">130.700</div>
<div class="t" style="right:378.30px;top:435.34px;font-size:12px;line-height:16px;color:#000;font-weight:normal;transform:scaleX(0.8948);transform-origin:100% 0;">2026.01.30 11:45:31</div>
<div class="t" style="right:271.32px;top:435.34px;font-size:12px;line-height:16px;color:#000;font-weight:normal;transform:scaleX(0.8900);transform-origin:100% 0;">96.100</div>
<div class="t" style="right:164.35px;top:435.34px;font-size:12px;line-height:16px;color:#ff0000;font-weight:normal;transform:scaleX(0.9205);transform-origin:100% 0;">-20.70</div>
<div class="t" style="right:20.29px;top:435.34px;font-size:12px;line-height:16px;color:#ff0000;font-weight:normal;transform:scaleX(0.9174);transform-origin:100% 0;">-25 950.00</div>
<div class="b" style="left:50px;top:453px;width:1299px;height:19px;background:#fff;"></div>
<div class="b" style="left:50px;top:472px;width:1299px;height:1px;background:#bcbcbc;"></div>
<div class="b" style="left:745px;top:453px;width:106px;height:19px;background:#40e840;"></div>
<div class="b" style="left:188px;top:453px;width:1px;height:19px;background:#c4c4c4;"></div>
<div class="b" style="left:284px;top:453px;width:1px;height:19px;background:#c4c4c4;"></div>
<div class="b" style="left:359px;top:453px;width:1px;height:19px;background:#c4c4c4;"></div>
<div class="b" style="left:423px;top:453px;width:1px;height:19px;background:#c4c4c4;"></div>
<div class="b" style="left:530px;top:453px;width:1px;height:19px;background:#c4c4c4;"></div>
<div class="b" style="left:637px;top:453px;width:1px;height:19px;background:#c4c4c4;"></div>
<div class="b" style="left:744px;top:453px;width:1px;height:19px;background:#c4c4c4;"></div>
<div class="b" style="left:851px;top:453px;width:1px;height:19px;background:#c4c4c4;"></div>
<div class="b" style="left:991px;top:453px;width:1px;height:19px;background:#c4c4c4;"></div>
<div class="b" style="left:1098px;top:453px;width:1px;height:19px;background:#c4c4c4;"></div>
<div class="b" style="left:1205px;top:453px;width:1px;height:19px;background:#c4c4c4;"></div>
<svg class="s" style="left:54px;top:455px" width="11" height="15" viewBox="0 0 11 15"><rect x="0.5" y="0.5" width="10" height="14" rx="2" fill="#fff" stroke="#0d3f8f" stroke-width="1.1"/><path d="M4 4.5H7M4 7.5H7" stroke="#0d3f8f" stroke-width="1.1"/></svg>
<div class="t" style="left:70.90px;top:455.34px;font-size:12px;line-height:16px;color:#000;font-weight:normal;transform:scaleX(0.8969);transform-origin:0 0;">2026.01.28 03:41:16</div>
<div class="t" style="right:1085.25px;top:455.34px;font-size:12px;line-height:16px;color:#000;font-weight:normal;transform:scaleX(0.9800);transform-origin:100% 0;">xauusd</div>
<div class="t" style="right:1010.33px;top:455.34px;font-size:12px;line-height:16px;color:#000;font-weight:normal;transform:scaleX(0.8900);transform-origin:100% 0;">54815098096</div>
<div class="t" style="right:946.27px;top:455.34px;font-size:12px;line-height:16px;color:#000;font-weight:normal;transform:scaleX(0.9800);transform-origin:100% 0;">buy</div>
<div class="t" style="right:839.30px;top:455.34px;font-size:12px;line-height:16px;color:#000;font-weight:normal;transform:scaleX(0.8900);transform-origin:100% 0;">0.3</div>
<div class="t" style="right:732.25px;top:455.34px;font-size:12px;line-height:16px;color:#000;font-weight:normal;transform:scaleX(0.8900);transform-origin:100% 0;">5210.00</div>
<div class="t" style="right:625.25px;top:455.34px;font-size:12px;line-height:16px;color:#000;font-weight:normal;transform:scaleX(0.8900);transform-origin:100% 0;">4980.00</div>
<div class="t" style="right:518.25px;top:455.34px;font-size:12px;line-height:16px;color:#000;font-weight:normal;transform:scaleX(0.8900);transform-origin:100% 0;">5440.00</div>
<div class="t" style="right:378.25px;top:455.34px;font-size:12px;line-height:16px;color:#000;font-weight:normal;transform:scaleX(0.8948);transform-origin:100% 0;">2026.01.29 01:01:30</div>
<div class="t" style="right:271.25px;top:455.34px;font-size:12px;line-height:16px;color:#000;font-weight:normal;transform:scaleX(0.8900);transform-origin:100% 0;">5440.00</div>
<div class="t" style="right:164.29px;top:455.34px;font-size:12px;line-height:16px;color:#ff0000;font-weight:normal;transform:scaleX(0.9205);transform-origin:100% 0;">-11.34</div>
<div class="t" style="right:20.28px;top:455.34px;font-size:12px;line-height:16px;color:#0000ff;font-weight:normal;transform:scaleX(0.9014);transform-origin:100% 0;">6 900.00</div>
<div class="b" style="left:50px;top:473px;width:1299px;height:19px;background:#e6e6e6;"></div>
<div class="b" style="left:50px;top:492px;width:1299px;height:1px;background:#bcbcbc;"></div>
<div class="b" style="left:638px;top:473px;width:106px;height:19px;background:#ff8a8a;"></div>
<div class="b" style="left:188px;top:473px;width:1px;height:19px;background:#c4c4c4;"></div>
<div class="b" style="left:284px;top:473px;width:1px;height:19px;background:#c4c4c4;"></div>
<div class="b" style="left:359px;top:473px;width:1px;height:19px;background:#c4c4c4;"></div>
<div class="b" style="left:423px;top:473px;width:1px;height:19px;background:#c4c4c4;"></div>
<div class="b" style="left:530px;top:473px;width:1px;height:19px;background:#c4c4c4;"></div>
<div class="b" style="left:637px;top:473px;width:1px;height:19px;background:#c4c4c4;"></div>
<div class="b" style="left:744px;top:473px;width:1px;height:19px;background:#c4c4c4;"></div>
<div class="b" style="left:851px;top:473px;width:1px;height:19px;background:#c4c4c4;"></div>
<div class="b" style="left:991px;top:473px;width:1px;height:19px;background:#c4c4c4;"></div>
<div class="b" style="left:1098px;top:473px;width:1px;height:19px;background:#c4c4c4;"></div>
<div class="b" style="left:1205px;top:473px;width:1px;height:19px;background:#c4c4c4;"></div>
<svg class="s" style="left:54px;top:475px" width="11" height="15" viewBox="0 0 11 15"><rect x="0.5" y="0.5" width="10" height="14" rx="2" fill="#fff" stroke="#0d3f8f" stroke-width="1.1"/><path d="M4 4.5H7M4 7.5H7" stroke="#0d3f8f" stroke-width="1.1"/></svg>
<div class="t" style="left:70.90px;top:475.34px;font-size:12px;line-height:16px;color:#000;font-weight:normal;transform:scaleX(0.8969);transform-origin:0 0;">2026.01.29 01:01:29</div>
<div class="t" style="right:1085.25px;top:475.34px;font-size:12px;line-height:16px;color:#000;font-weight:normal;transform:scaleX(0.9800);transform-origin:100% 0;">xauusd</div>
<div class="t" style="right:1010.33px;top:475.34px;font-size:12px;line-height:16px;color:#000;font-weight:normal;transform:scaleX(0.8900);transform-origin:100% 0;">54864725879</div>
<div class="t" style="right:946.27px;top:475.34px;font-size:12px;line-height:16px;color:#000;font-weight:normal;transform:scaleX(0.9800);transform-origin:100% 0;">buy</div>
<div class="t" style="right:839.30px;top:475.34px;font-size:12px;line-height:16px;color:#000;font-weight:normal;transform:scaleX(0.8900);transform-origin:100% 0;">0.3</div>
<div class="t" style="right:732.25px;top:475.34px;font-size:12px;line-height:16px;color:#000;font-weight:normal;transform:scaleX(0.8900);transform-origin:100% 0;">5440.00</div>
<div class="t" style="right:625.25px;top:475.34px;font-size:12px;line-height:16px;color:#000;font-weight:normal;transform:scaleX(0.8900);transform-origin:100% 0;">5000.00</div>
<div class="t" style="right:518.25px;top:475.34px;font-size:12px;line-height:16px;color:#000;font-weight:normal;transform:scaleX(0.8900);transform-origin:100% 0;">5880.00</div>
<div class="t" style="right:378.30px;top:475.34px;font-size:12px;line-height:16px;color:#000;font-weight:normal;transform:scaleX(0.8948);transform-origin:100% 0;">2026.01.30 11:45:09</div>
<div class="t" style="right:271.25px;top:475.34px;font-size:12px;line-height:16px;color:#000;font-weight:normal;transform:scaleX(0.8900);transform-origin:100% 0;">5000.00</div>
<div class="t" style="right:164.31px;top:475.34px;font-size:12px;line-height:16px;color:#ff0000;font-weight:normal;transform:scaleX(0.9280);transform-origin:100% 0;">-3.78</div>
<div class="t" style="right:20.29px;top:475.34px;font-size:12px;line-height:16px;color:#ff0000;font-weight:normal;transform:scaleX(0.9174);transform-origin:100% 0;">-13 200.00</div>
<div class="b" style="left:50px;top:493px;width:1299px;height:19px;background:#fff;"></div>
<div class="b" style="left:50px;top:512px;width:1299px;height:1px;background:#bcbcbc;"></div>
<div class="b" style="left:745px;top:493px;width:106px;height:19px;background:#40e840;"></div>
<div class="b" style="left:188px;top:493px;width:1px;height:19px;background:#c4c4c4;"></div>
<div class="b" style="left:284px;top:493px;width:1px;height:19px;background:#c4c4c4;"></div>
<div class="b" style="left:359px;top:493px;width:1px;height:19px;background:#c4c4c4;"></div>
<div class="b" style="left:423px;top:493px;width:1px;height:19px;background:#c4c4c4;"></div>
<div class="b" style="left:530px;top:493px;width:1px;height:19px;background:#c4c4c4;"></div>
<div class="b" style="left:637px;top:493px;width:1px;height:19px;background:#c4c4c4;"></div>
<div class="b" style="left:744px;top:493px;width:1px;height:19px;background:#c4c4c4;"></div>
<div class="b" style="left:851px;top:493px;width:1px;height:19px;background:#c4c4c4;"></div>
<div class="b" style="left:991px;top:493px;width:1px;height:19px;background:#c4c4c4;"></div>
<div class="b" style="left:1098px;top:493px;width:1px;height:19px;background:#c4c4c4;"></div>
<div class="b" style="left:1205px;top:493px;width:1px;height:19px;background:#c4c4c4;"></div>
<svg class="s" style="left:54px;top:495px" width="11" height="15" viewBox="0 0 11 15"><rect x="0.5" y="0.5" width="10" height="14" rx="2" fill="#fff" stroke="#d42020" stroke-width="1.1"/><path d="M4 4.5H7M4 7.5H7" stroke="#d42020" stroke-width="1.1"/></svg>
<div class="t" style="left:70.90px;top:495.34px;font-size:12px;line-height:16px;color:#000;font-weight:normal;transform:scaleX(0.8969);transform-origin:0 0;">2026.01.29 17:26:46</div>
<div class="t" style="right:1085.25px;top:495.34px;font-size:12px;line-height:16px;color:#000;font-weight:normal;transform:scaleX(0.9800);transform-origin:100% 0;">xagusd</div>
<div class="t" style="right:1010.33px;top:495.34px;font-size:12px;line-height:16px;color:#000;font-weight:normal;transform:scaleX(0.8900);transform-origin:100% 0;">54893421949</div>
<div class="t" style="right:946.29px;top:495.34px;font-size:12px;line-height:16px;color:#000;font-weight:normal;transform:scaleX(0.9800);transform-origin:100% 0;">sell</div>
<div class="t" style="right:839.30px;top:495.34px;font-size:12px;line-height:16px;color:#000;font-weight:normal;transform:scaleX(0.8900);transform-origin:100% 0;">0.3</div>
<div class="t" style="right:732.30px;top:495.34px;font-size:12px;line-height:16px;color:#000;font-weight:normal;transform:scaleX(0.8900);transform-origin:100% 0;">110.400</div>
<div class="t" style="right:625.25px;top:495.34px;font-size:12px;line-height:16px;color:#000;font-weight:normal;transform:scaleX(0.8900);transform-origin:100% 0;">120.500</div>
<div class="t" style="right:518.25px;top:495.34px;font-size:12px;line-height:16px;color:#000;font-weight:normal;transform:scaleX(0.8900);transform-origin:100% 0;">100.300</div>
<div class="t" style="right:378.30px;top:495.34px;font-size:12px;line-height:16px;color:#000;font-weight:normal;transform:scaleX(0.8948);transform-origin:100% 0;">2026.01.30 11:28:26</div>
<div class="t" style="right:271.25px;top:495.34px;font-size:12px;line-height:16px;color:#000;font-weight:normal;transform:scaleX(0.8900);transform-origin:100% 0;">100.300</div>
<div class="t" style="right:164.34px;top:495.34px;font-size:12px;line-height:16px;color:#0000ff;font-weight:normal;transform:scaleX(0.8900);transform-origin:100% 0;">0.30</div>
<div class="t" style="right:20.32px;top:495.34px;font-size:12px;line-height:16px;color:#0000ff;font-weight:normal;transform:scaleX(0.9000);transform-origin:100% 0;">15 150.00</div>
<div class="b" style="left:50px;top:513px;width:1299px;height:19px;background:#e6e6e6;"></div>
<div class="b" style="left:50px;top:532px;width:1299px;height:1px;background:#bcbcbc;"></div>
<div class="b" style="left:745px;top:513px;width:106px;height:19px;background:#40e840;"></div>
<div class="b" style="left:188px;top:513px;width:1px;height:19px;background:#c4c4c4;"></div>
<div class="b" style="left:284px;top:513px;width:1px;height:19px;background:#c4c4c4;"></div>
<div class="b" style="left:359px;top:513px;width:1px;height:19px;background:#c4c4c4;"></div>
<div class="b" style="left:423px;top:513px;width:1px;height:19px;background:#c4c4c4;"></div>
<div class="b" style="left:530px;top:513px;width:1px;height:19px;background:#c4c4c4;"></div>
<div class="b" style="left:637px;top:513px;width:1px;height:19px;background:#c4c4c4;"></div>
<div class="b" style="left:744px;top:513px;width:1px;height:19px;background:#c4c4c4;"></div>
<div class="b" style="left:851px;top:513px;width:1px;height:19px;background:#c4c4c4;"></div>
<div class="b" style="left:991px;top:513px;width:1px;height:19px;background:#c4c4c4;"></div>
<div class="b" style="left:1098px;top:513px;width:1px;height:19px;background:#c4c4c4;"></div>
<div class="b" style="left:1205px;top:513px;width:1px;height:19px;background:#c4c4c4;"></div>
<svg class="s" style="left:54px;top:515px" width="11" height="15" viewBox="0 0 11 15"><rect x="0.5" y="0.5" width="10" height="14" rx="2" fill="#fff" stroke="#d42020" stroke-width="1.1"/><path d="M4 4.5H7M4 7.5H7" stroke="#d42020" stroke-width="1.1"/></svg>
<div class="t" style="left:70.90px;top:515.34px;font-size:12px;line-height:16px;color:#000;font-weight:normal;transform:scaleX(0.8969);transform-origin:0 0;">2026.01.29 17:27:58</div>
<div class="t" style="right:1085.25px;top:515.34px;font-size:12px;line-height:16px;color:#000;font-weight:normal;transform:scaleX(0.9800);transform-origin:100% 0;">xauusd</div>
<div class="t" style="right:1010.33px;top:515.34px;font-size:12px;line-height:16px;color:#000;font-weight:normal;transform:scaleX(0.8900);transform-origin:100% 0;">54893310969</div>
<div class="t" style="right:946.29px;top:515.34px;font-size:12px;line-height:16px;color:#000;font-weight:normal;transform:scaleX(0.9800);transform-origin:100% 0;">sell</div>
<div class="t" style="right:839.30px;top:515.34px;font-size:12px;line-height:16px;color:#000;font-weight:normal;transform:scaleX(0.8900);transform-origin:100% 0;">0.3</div>
<div class="t" style="right:732.25px;top:515.34px;font-size:12px;line-height:16px;color:#000;font-weight:normal;transform:scaleX(0.8900);transform-origin:100% 0;">5150.00</div>
<div class="t" style="right:625.25px;top:515.34px;font-size:12px;line-height:16px;color:#000;font-weight:normal;transform:scaleX(0.8900);transform-origin:100% 0;">5600.00</div>
<div class="t" style="right:518.25px;top:515.34px;font-size:12px;line-height:16px;color:#000;font-weight:normal;transform:scaleX(0.8900);transform-origin:100% 0;">4700.00</div>
<div class="t" style="right:378.25px;top:515.34px;font-size:12px;line-height:16px;color:#000;font-weight:normal;transform:scaleX(0.8948);transform-origin:100% 0;">2026.01.30 20:29:01</div>
<div class="t" style="right:271.25px;top:515.34px;font-size:12px;line-height:16px;color:#000;font-weight:normal;transform:scaleX(0.8900);transform-origin:100% 0;">4700.00</div>
<div class="t" style="right:164.31px;top:515.34px;font-size:12px;line-height:16px;color:#ff0000;font-weight:normal;transform:scaleX(0.9280);transform-origin:100% 0;">-1.38</div>
<div class="t" style="right:20.32px;top:515.34px;font-size:12px;line-height:16px;color:#0000ff;font-weight:normal;transform:scaleX(0.9000);transform-origin:100% 0;">13 500.00</div>
<div class="b" style="left:50px;top:533px;width:1299px;height:19px;background:#fff;"></div>
<div class="b" style="left:50px;top:552px;width:1299px;height:1px;background:#bcbcbc;"></div>
<div class="b" style="left:745px;top:533px;width:106px;height:19px;background:#40e840;"></div>
<div class="b" style="left:188px;top:533px;width:1px;height:19px;background:#c4c4c4;"></div>
<div class="b" style="left:284px;top:533px;width:1px;height:19px;background:#c4c4c4;"></div>
<div class="b" style="left:359px;top:533px;width:1px;height:19px;background:#c4c4c4;"></div>
<div class="b" style="left:423px;top:533px;width:1px;height:19px;background:#c4c4c4;"></div>
<div class="b" style="left:530px;top:533px;width:1px;height:19px;background:#c4c4c4;"></div>
<div class="b" style="left:637px;top:533px;width:1px;height:19px;background:#c4c4c4;"></div>
<div class="b" style="left:744px;top:533px;width:1px;height:19px;background:#c4c4c4;"></div>
<div class="b" style="left:851px;top:533px;width:1px;height:19px;background:#c4c4c4;"></div>
<div class="b" style="left:991px;top:533px;width:1px;height:19px;background:#c4c4c4;"></div>
<div class="b" style="left:1098px;top:533px;width:1px;height:19px;background:#c4c4c4;"></div>
<div class="b" style="left:1205px;top:533px;width:1px;height:19px;background:#c4c4c4;"></div>
<svg class="s" style="left:54px;top:535px" width="11" height="15" viewBox="0 0 11 15"><rect x="0.5" y="0.5" width="10" height="14" rx="2" fill="#fff" stroke="#d42020" stroke-width="1.1"/><path d="M4 4.5H7M4 7.5H7" stroke="#d42020" stroke-width="1.1"/></svg>
<div class="t" style="left:70.90px;top:535.34px;font-size:12px;line-height:16px;color:#000;font-weight:normal;transform:scaleX(0.8969);transform-origin:0 0;">2026.01.30 18:23:21</div>
<div class="t" style="right:1085.25px;top:535.34px;font-size:12px;line-height:16px;color:#000;font-weight:normal;transform:scaleX(0.9800);transform-origin:100% 0;">xagusd</div>
<div class="t" style="right:1010.33px;top:535.34px;font-size:12px;line-height:16px;color:#000;font-weight:normal;transform:scaleX(0.8900);transform-origin:100% 0;">54925694776</div>
<div class="t" style="right:946.29px;top:535.34px;font-size:12px;line-height:16px;color:#000;font-weight:normal;transform:scaleX(0.9800);transform-origin:100% 0;">sell</div>
<div class="t" style="right:839.30px;top:535.34px;font-size:12px;line-height:16px;color:#000;font-weight:normal;transform:scaleX(0.8900);transform-origin:100% 0;">0.3</div>
<div class="t" style="right:732.32px;top:535.34px;font-size:12px;line-height:16px;color:#000;font-weight:normal;transform:scaleX(0.8900);transform-origin:100% 0;">94.900</div>
<div class="t" style="right:625.25px;top:535.34px;font-size:12px;line-height:16px;color:#000;font-weight:normal;transform:scaleX(0.8900);transform-origin:100% 0;">121.700</div>
<div class="t" style="right:518.32px;top:535.34px;font-size:12px;line-height:16px;color:#000;font-weight:normal;transform:scaleX(0.8900);transform-origin:100% 0;">68.100</div>
<div class="t" style="right:378.30px;top:535.34px;font-size:12px;line-height:16px;color:#000;font-weight:normal;transform:scaleX(0.8948);transform-origin:100% 0;">2026.02.06 01:22:11</div>
<div class="t" style="right:271.32px;top:535.34px;font-size:12px;line-height:16px;color:#000;font-weight:normal;transform:scaleX(0.8900);transform-origin:100% 0;">68.100</div>
<div class="t" style="right:164.34px;top:535.34px;font-size:12px;line-height:16px;color:#0000ff;font-weight:normal;transform:scaleX(0.8900);transform-origin:100% 0;">2.10</div>
<div class="t" style="right:20.32px;top:535.34px;font-size:12px;line-height:16px;color:#0000ff;font-weight:normal;transform:scaleX(0.9000);transform-origin:100% 0;">40 200.00</div>
<div class="b" style="left:50px;top:553px;width:1299px;height:19px;background:#e6e6e6;"></div>
<div class="b" style="left:50px;top:572px;width:1299px;height:1px;background:#bcbcbc;"></div>
<div class="b" style="left:638px;top:553px;width:106px;height:19px;background:#ff8a8a;"></div>
<div class="b" style="left:188px;top:553px;width:1px;height:19px;background:#c4c4c4;"></div>
<div class="b" style="left:284px;top:553px;width:1px;height:19px;background:#c4c4c4;"></div>
<div class="b" style="left:359px;top:553px;width:1px;height:19px;background:#c4c4c4;"></div>
<div class="b" style="left:423px;top:553px;width:1px;height:19px;background:#c4c4c4;"></div>
<div class="b" style="left:530px;top:553px;width:1px;height:19px;background:#c4c4c4;"></div>
<div class="b" style="left:637px;top:553px;width:1px;height:19px;background:#c4c4c4;"></div>
<div class="b" style="left:744px;top:553px;width:1px;height:19px;background:#c4c4c4;"></div>
<div class="b" style="left:851px;top:553px;width:1px;height:19px;background:#c4c4c4;"></div>
<div class="b" style="left:991px;top:553px;width:1px;height:19px;background:#c4c4c4;"></div>
<div class="b" style="left:1098px;top:553px;width:1px;height:19px;background:#c4c4c4;"></div>
<div class="b" style="left:1205px;top:553px;width:1px;height:19px;background:#c4c4c4;"></div>
<svg class="s" style="left:54px;top:555px" width="11" height="15" viewBox="0 0 11 15"><rect x="0.5" y="0.5" width="10" height="14" rx="2" fill="#fff" stroke="#0d3f8f" stroke-width="1.1"/><path d="M4 4.5H7M4 7.5H7" stroke="#0d3f8f" stroke-width="1.1"/></svg>
<div class="t" style="left:70.90px;top:555.34px;font-size:12px;line-height:16px;color:#000;font-weight:normal;transform:scaleX(0.8969);transform-origin:0 0;">2026.02.03 15:13:21</div>
<div class="t" style="right:1085.25px;top:555.34px;font-size:12px;line-height:16px;color:#000;font-weight:normal;transform:scaleX(0.9800);transform-origin:100% 0;">xagusd</div>
<div class="t" style="right:1010.33px;top:555.34px;font-size:12px;line-height:16px;color:#000;font-weight:normal;transform:scaleX(0.8900);transform-origin:100% 0;">54999587736</div>
<div class="t" style="right:946.27px;top:555.34px;font-size:12px;line-height:16px;color:#000;font-weight:normal;transform:scaleX(0.9800);transform-origin:100% 0;">buy</div>
<div class="t" style="right:839.30px;top:555.34px;font-size:12px;line-height:16px;color:#000;font-weight:normal;transform:scaleX(0.8900);transform-origin:100% 0;">0.3</div>
<div class="t" style="right:732.32px;top:555.34px;font-size:12px;line-height:16px;color:#000;font-weight:normal;transform:scaleX(0.8900);transform-origin:100% 0;">88.000</div>
<div class="t" style="right:625.32px;top:555.34px;font-size:12px;line-height:16px;color:#000;font-weight:normal;transform:scaleX(0.8900);transform-origin:100% 0;">71.200</div>
<div class="t" style="right:518.25px;top:555.34px;font-size:12px;line-height:16px;color:#000;font-weight:normal;transform:scaleX(0.8900);transform-origin:100% 0;">104.800</div>
<div class="t" style="right:378.25px;top:555.34px;font-size:12px;line-height:16px;color:#000;font-weight:normal;transform:scaleX(0.8948);transform-origin:100% 0;">2026.02.05 23:44:23</div>
<div class="t" style="right:271.32px;top:555.34px;font-size:12px;line-height:16px;color:#000;font-weight:normal;transform:scaleX(0.8900);transform-origin:100% 0;">71.200</div>
<div class="t" style="right:164.35px;top:555.34px;font-size:12px;line-height:16px;color:#ff0000;font-weight:normal;transform:scaleX(0.9205);transform-origin:100% 0;">-13.80</div>
<div class="t" style="right:20.29px;top:555.34px;font-size:12px;line-height:16px;color:#ff0000;font-weight:normal;transform:scaleX(0.9174);transform-origin:100% 0;">-25 200.00</div>
<div class="b" style="left:50px;top:573px;width:1299px;height:19px;background:#fff;"></div>
<div class="b" style="left:50px;top:592px;width:1299px;height:1px;background:#bcbcbc;"></div>
<div class="b" style="left:638px;top:573px;width:106px;height:19px;background:#ff8a8a;"></div>
<div class="b" style="left:188px;top:573px;width:1px;height:19px;background:#c4c4c4;"></div>
<div class="b" style="left:284px;top:573px;width:1px;height:19px;background:#c4c4c4;"></div>
<div class="b" style="left:359px;top:573px;width:1px;height:19px;background:#c4c4c4;"></div>
<div class="b" style="left:423px;top:573px;width:1px;height:19px;background:#c4c4c4;"></div>
<div class="b" style="left:530px;top:573px;width:1px;height:19px;background:#c4c4c4;"></div>
<div class="b" style="left:637px;top:573px;width:1px;height:19px;background:#c4c4c4;"></div>
<div class="b" style="left:744px;top:573px;width:1px;height:19px;background:#c4c4c4;"></div>
<div class="b" style="left:851px;top:573px;width:1px;height:19px;background:#c4c4c4;"></div>
<div class="b" style="left:991px;top:573px;width:1px;height:19px;background:#c4c4c4;"></div>
<div class="b" style="left:1098px;top:573px;width:1px;height:19px;background:#c4c4c4;"></div>
<div class="b" style="left:1205px;top:573px;width:1px;height:19px;background:#c4c4c4;"></div>
<svg class="s" style="left:54px;top:575px" width="11" height="15" viewBox="0 0 11 15"><rect x="0.5" y="0.5" width="10" height="14" rx="2" fill="#fff" stroke="#0d3f8f" stroke-width="1.1"/><path d="M4 4.5H7M4 7.5H7" stroke="#0d3f8f" stroke-width="1.1"/></svg>
<div class="t" style="left:70.90px;top:575.34px;font-size:12px;line-height:16px;color:#000;font-weight:normal;transform:scaleX(0.8969);transform-origin:0 0;">2026.02.04 14:01:06</div>
<div class="t" style="right:1085.25px;top:575.34px;font-size:12px;line-height:16px;color:#000;font-weight:normal;transform:scaleX(0.9800);transform-origin:100% 0;">xagusd</div>
<div class="t" style="right:1010.33px;top:575.34px;font-size:12px;line-height:16px;color:#000;font-weight:normal;transform:scaleX(0.8900);transform-origin:100% 0;">55030106916</div>
<div class="t" style="right:946.27px;top:575.34px;font-size:12px;line-height:16px;color:#000;font-weight:normal;transform:scaleX(0.9800);transform-origin:100% 0;">buy</div>
<div class="t" style="right:839.30px;top:575.34px;font-size:12px;line-height:16px;color:#000;font-weight:normal;transform:scaleX(0.8900);transform-origin:100% 0;">0.3</div>
<div class="t" style="right:732.32px;top:575.34px;font-size:12px;line-height:16px;color:#000;font-weight:normal;transform:scaleX(0.8900);transform-origin:100% 0;">90.800</div>
<div class="t" style="right:625.32px;top:575.34px;font-size:12px;line-height:16px;color:#000;font-weight:normal;transform:scaleX(0.8900);transform-origin:100% 0;">78.800</div>
<div class="t" style="right:518.25px;top:575.34px;font-size:12px;line-height:16px;color:#000;font-weight:normal;transform:scaleX(0.8900);transform-origin:100% 0;">102.800</div>
<div class="t" style="right:378.25px;top:575.34px;font-size:12px;line-height:16px;color:#000;font-weight:normal;transform:scaleX(0.8948);transform-origin:100% 0;">2026.02.05 04:45:20</div>
<div class="t" style="right:271.32px;top:575.34px;font-size:12px;line-height:16px;color:#000;font-weight:normal;transform:scaleX(0.8900);transform-origin:100% 0;">78.800</div>
<div class="t" style="right:164.35px;top:575.34px;font-size:12px;line-height:16px;color:#ff0000;font-weight:normal;transform:scaleX(0.9205);transform-origin:100% 0;">-10.35</div>
<div class="t" style="right:20.29px;top:575.34px;font-size:12px;line-height:16px;color:#ff0000;font-weight:normal;transform:scaleX(0.9174);transform-origin:100% 0;">-18 000.00</div>
<div class="b" style="left:50px;top:593px;width:1299px;height:19px;background:#e6e6e6;"></div>
<div class="b" style="left:50px;top:612px;width:1299px;height:1px;background:#bcbcbc;"></div>
<div class="b" style="left:745px;top:593px;width:106px;height:19px;background:#40e840;"></div>
<div class="b" style="left:188px;top:593px;width:1px;height:19px;background:#c4c4c4;"></div>
<div class="b" style="left:284px;top:593px;width:1px;height:19px;background:#c4c4c4;"></div>
<div class="b" style="left:359px;top:593px;width:1px;height:19px;background:#c4c4c4;"></div>
<div class="b" style="left:423px;top:593px;width:1px;height:19px;background:#c4c4c4;"></div>
<div class="b" style="left:530px;top:593px;width:1px;height:19px;background:#c4c4c4;"></div>
<div class="b" style="left:637px;top:593px;width:1px;height:19px;background:#c4c4c4;"></div>
<div class="b" style="left:744px;top:593px;width:1px;height:19px;background:#c4c4c4;"></div>
<div class="b" style="left:851px;top:593px;width:1px;height:19px;background:#c4c4c4;"></div>
<div class="b" style="left:991px;top:593px;width:1px;height:19px;background:#c4c4c4;"></div>
<div class="b" style="left:1098px;top:593px;width:1px;height:19px;background:#c4c4c4;"></div>
<div class="b" style="left:1205px;top:593px;width:1px;height:19px;background:#c4c4c4;"></div>
<svg class="s" style="left:54px;top:595px" width="11" height="15" viewBox="0 0 11 15"><rect x="0.5" y="0.5" width="10" height="14" rx="2" fill="#fff" stroke="#d42020" stroke-width="1.1"/><path d="M4 4.5H7M4 7.5H7" stroke="#d42020" stroke-width="1.1"/></svg>
<div class="t" style="left:70.90px;top:595.34px;font-size:12px;line-height:16px;color:#000;font-weight:normal;transform:scaleX(0.8969);transform-origin:0 0;">2026.02.05 04:45:20</div>
<div class="t" style="right:1085.25px;top:595.34px;font-size:12px;line-height:16px;color:#000;font-weight:normal;transform:scaleX(0.9800);transform-origin:100% 0;">xagusd</div>
<div class="t" style="right:1010.33px;top:595.34px;font-size:12px;line-height:16px;color:#000;font-weight:normal;transform:scaleX(0.8900);transform-origin:100% 0;">55030170752</div>
<div class="t" style="right:946.29px;top:595.34px;font-size:12px;line-height:16px;color:#000;font-weight:normal;transform:scaleX(0.9800);transform-origin:100% 0;">sell</div>
<div class="t" style="right:839.30px;top:595.34px;font-size:12px;line-height:16px;color:#000;font-weight:normal;transform:scaleX(0.8900);transform-origin:100% 0;">0.3</div>
<div class="t" style="right:732.32px;top:595.34px;font-size:12px;line-height:16px;color:#000;font-weight:normal;transform:scaleX(0.8900);transform-origin:100% 0;">78.800</div>
<div class="t" style="right:625.32px;top:595.34px;font-size:12px;line-height:16px;color:#000;font-weight:normal;transform:scaleX(0.8900);transform-origin:100% 0;">90.800</div>
<div class="t" style="right:518.32px;top:595.34px;font-size:12px;line-height:16px;color:#000;font-weight:normal;transform:scaleX(0.8900);transform-origin:100% 0;">66.800</div>
<div class="t" style="right:378.25px;top:595.34px;font-size:12px;line-height:16px;color:#000;font-weight:normal;transform:scaleX(0.8948);transform-origin:100% 0;">2026.02.06 02:01:16</div>
<div class="t" style="right:271.32px;top:595.34px;font-size:12px;line-height:16px;color:#000;font-weight:normal;transform:scaleX(0.8900);transform-origin:100% 0;">66.800</div>
<div class="t" style="right:164.34px;top:595.34px;font-size:12px;line-height:16px;color:#0000ff;font-weight:normal;transform:scaleX(0.8900);transform-origin:100% 0;">0.30</div>
<div class="t" style="right:20.32px;top:595.34px;font-size:12px;line-height:16px;color:#0000ff;font-weight:normal;transform:scaleX(0.9000);transform-origin:100% 0;">18 000.00</div>
<div class="b" style="left:50px;top:613px;width:1299px;height:19px;background:#fff;"></div>
<div class="b" style="left:50px;top:632px;width:1299px;height:1px;background:#bcbcbc;"></div>
<div class="b" style="left:638px;top:613px;width:106px;height:19px;background:#ff8a8a;"></div>
<div class="b" style="left:188px;top:613px;width:1px;height:19px;background:#c4c4c4;"></div>
<div class="b" style="left:284px;top:613px;width:1px;height:19px;background:#c4c4c4;"></div>
<div class="b" style="left:359px;top:613px;width:1px;height:19px;background:#c4c4c4;"></div>
<div class="b" style="left:423px;top:613px;width:1px;height:19px;background:#c4c4c4;"></div>
<div class="b" style="left:530px;top:613px;width:1px;height:19px;background:#c4c4c4;"></div>
<div class="b" style="left:637px;top:613px;width:1px;height:19px;background:#c4c4c4;"></div>
<div class="b" style="left:744px;top:613px;width:1px;height:19px;background:#c4c4c4;"></div>
<div class="b" style="left:851px;top:613px;width:1px;height:19px;background:#c4c4c4;"></div>
<div class="b" style="left:991px;top:613px;width:1px;height:19px;background:#c4c4c4;"></div>
<div class="b" style="left:1098px;top:613px;width:1px;height:19px;background:#c4c4c4;"></div>
<div class="b" style="left:1205px;top:613px;width:1px;height:19px;background:#c4c4c4;"></div>
<svg class="s" style="left:54px;top:615px" width="11" height="15" viewBox="0 0 11 15"><rect x="0.5" y="0.5" width="10" height="14" rx="2" fill="#fff" stroke="#d42020" stroke-width="1.1"/><path d="M4 4.5H7M4 7.5H7" stroke="#d42020" stroke-width="1.1"/></svg>
<div class="t" style="left:70.90px;top:615.34px;font-size:12px;line-height:16px;color:#000;font-weight:normal;transform:scaleX(0.8969);transform-origin:0 0;">2026.02.05 23:34:24</div>
<div class="t" style="right:1085.25px;top:615.34px;font-size:12px;line-height:16px;color:#000;font-weight:normal;transform:scaleX(0.9800);transform-origin:100% 0;">xauusd</div>
<div class="t" style="right:1010.33px;top:615.34px;font-size:12px;line-height:16px;color:#000;font-weight:normal;transform:scaleX(0.8900);transform-origin:100% 0;">55030000295</div>
<div class="t" style="right:946.29px;top:615.34px;font-size:12px;line-height:16px;color:#000;font-weight:normal;transform:scaleX(0.9800);transform-origin:100% 0;">sell</div>
<div class="t" style="right:839.30px;top:615.34px;font-size:12px;line-height:16px;color:#000;font-weight:normal;transform:scaleX(0.8900);transform-origin:100% 0;">0.3</div>
<div class="t" style="right:732.25px;top:615.34px;font-size:12px;line-height:16px;color:#000;font-weight:normal;transform:scaleX(0.8900);transform-origin:100% 0;">4780.00</div>
<div class="t" style="right:625.25px;top:615.34px;font-size:12px;line-height:16px;color:#000;font-weight:normal;transform:scaleX(0.8900);transform-origin:100% 0;">5100.00</div>
<div class="t" style="right:518.25px;top:615.34px;font-size:12px;line-height:16px;color:#000;font-weight:normal;transform:scaleX(0.8900);transform-origin:100% 0;">4460.00</div>
<div class="t" style="right:378.30px;top:615.34px;font-size:12px;line-height:16px;color:#000;font-weight:normal;transform:scaleX(0.8948);transform-origin:100% 0;">2026.02.11 12:44:36</div>
<div class="t" style="right:271.25px;top:615.34px;font-size:12px;line-height:16px;color:#000;font-weight:normal;transform:scaleX(0.8900);transform-origin:100% 0;">5100.00</div>
<div class="t" style="right:164.31px;top:615.34px;font-size:12px;line-height:16px;color:#ff0000;font-weight:normal;transform:scaleX(0.9280);transform-origin:100% 0;">-5.52</div>
<div class="t" style="right:20.35px;top:615.34px;font-size:12px;line-height:16px;color:#ff0000;font-weight:normal;transform:scaleX(0.9210);transform-origin:100% 0;">-9 600.00</div>
<div class="b" style="left:50px;top:633px;width:1299px;height:19px;background:#e6e6e6;"></div>
<div class="b" style="left:50px;top:652px;width:1299px;height:1px;background:#bcbcbc;"></div>
<div class="b" style="left:638px;top:633px;width:106px;height:19px;background:#ff8a8a;"></div>
<div class="b" style="left:188px;top:633px;width:1px;height:19px;background:#c4c4c4;"></div>
<div class="b" style="left:284px;top:633px;width:1px;height:19px;background:#c4c4c4;"></div>
<div class="b" style="left:359px;top:633px;width:1px;height:19px;background:#c4c4c4;"></div>
<div class="b" style="left:423px;top:633px;width:1px;height:19px;background:#c4c4c4;"></div>
<div class="b" style="left:530px;top:633px;width:1px;height:19px;background:#c4c4c4;"></div>
<div class="b" style="left:637px;top:633px;width:1px;height:19px;background:#c4c4c4;"></div>
<div class="b" style="left:744px;top:633px;width:1px;height:19px;background:#c4c4c4;"></div>
<div class="b" style="left:851px;top:633px;width:1px;height:19px;background:#c4c4c4;"></div>
<div class="b" style="left:991px;top:633px;width:1px;height:19px;background:#c4c4c4;"></div>
<div class="b" style="left:1098px;top:633px;width:1px;height:19px;background:#c4c4c4;"></div>
<div class="b" style="left:1205px;top:633px;width:1px;height:19px;background:#c4c4c4;"></div>
<svg class="s" style="left:54px;top:635px" width="11" height="15" viewBox="0 0 11 15"><rect x="0.5" y="0.5" width="10" height="14" rx="2" fill="#fff" stroke="#0d3f8f" stroke-width="1.1"/><path d="M4 4.5H7M4 7.5H7" stroke="#0d3f8f" stroke-width="1.1"/></svg>
<div class="t" style="left:70.90px;top:635.34px;font-size:12px;line-height:16px;color:#000;font-weight:normal;transform:scaleX(0.8969);transform-origin:0 0;">2026.02.09 17:54:33</div>
<div class="t" style="right:1085.25px;top:635.34px;font-size:12px;line-height:16px;color:#000;font-weight:normal;transform:scaleX(0.9800);transform-origin:100% 0;">xagusd</div>
<div class="t" style="right:1010.33px;top:635.34px;font-size:12px;line-height:16px;color:#000;font-weight:normal;transform:scaleX(0.8900);transform-origin:100% 0;">55088786619</div>
<div class="t" style="right:946.27px;top:635.34px;font-size:12px;line-height:16px;color:#000;font-weight:normal;transform:scaleX(0.9800);transform-origin:100% 0;">buy</div>
<div class="t" style="right:839.30px;top:635.34px;font-size:12px;line-height:16px;color:#000;font-weight:normal;transform:scaleX(0.8900);transform-origin:100% 0;">0.3</div>
<div class="t" style="right:732.32px;top:635.34px;font-size:12px;line-height:16px;color:#000;font-weight:normal;transform:scaleX(0.8900);transform-origin:100% 0;">82.500</div>
<div class="t" style="right:625.32px;top:635.34px;font-size:12px;line-height:16px;color:#000;font-weight:normal;transform:scaleX(0.8900);transform-origin:100% 0;">78.000</div>
<div class="t" style="right:518.32px;top:635.34px;font-size:12px;line-height:16px;color:#000;font-weight:normal;transform:scaleX(0.8900);transform-origin:100% 0;">87.000</div>
<div class="t" style="right:378.25px;top:635.34px;font-size:12px;line-height:16px;color:#000;font-weight:normal;transform:scaleX(0.8948);transform-origin:100% 0;">2026.02.12 18:17:39</div>
<div class="t" style="right:271.32px;top:635.34px;font-size:12px;line-height:16px;color:#000;font-weight:normal;transform:scaleX(0.8900);transform-origin:100% 0;">78.000</div>
<div class="t" style="right:164.35px;top:635.34px;font-size:12px;line-height:16px;color:#ff0000;font-weight:normal;transform:scaleX(0.9205);transform-origin:100% 0;">-17.25</div>
<div class="t" style="right:20.35px;top:635.34px;font-size:12px;line-height:16px;color:#ff0000;font-weight:normal;transform:scaleX(0.9210);transform-origin:100% 0;">-6 750.00</div>
<div class="b" style="left:50px;top:653px;width:1299px;height:19px;background:#fff;"></div>
<div class="b" style="left:50px;top:672px;width:1299px;height:1px;background:#bcbcbc;"></div>
<div class="b" style="left:638px;top:653px;width:106px;height:19px;background:#ff8a8a;"></div>
<div class="b" style="left:188px;top:653px;width:1px;height:19px;background:#c4c4c4;"></div>
<div class="b" style="left:284px;top:653px;width:1px;height:19px;background:#c4c4c4;"></div>
<div class="b" style="left:359px;top:653px;width:1px;height:19px;background:#c4c4c4;"></div>
<div class="b" style="left:423px;top:653px;width:1px;height:19px;background:#c4c4c4;"></div>
<div class="b" style="left:530px;top:653px;width:1px;height:19px;background:#c4c4c4;"></div>
<div class="b" style="left:637px;top:653px;width:1px;height:19px;background:#c4c4c4;"></div>
<div class="b" style="left:744px;top:653px;width:1px;height:19px;background:#c4c4c4;"></div>
<div class="b" style="left:851px;top:653px;width:1px;height:19px;background:#c4c4c4;"></div>
<div class="b" style="left:991px;top:653px;width:1px;height:19px;background:#c4c4c4;"></div>
<div class="b" style="left:1098px;top:653px;width:1px;height:19px;background:#c4c4c4;"></div>
<div class="b" style="left:1205px;top:653px;width:1px;height:19px;background:#c4c4c4;"></div>
<svg class="s" style="left:54px;top:655px" width="11" height="15" viewBox="0 0 11 15"><rect x="0.5" y="0.5" width="10" height="14" rx="2" fill="#fff" stroke="#0d3f8f" stroke-width="1.1"/><path d="M4 4.5H7M4 7.5H7" stroke="#0d3f8f" stroke-width="1.1"/></svg>
<div class="t" style="left:70.90px;top:655.34px;font-size:12px;line-height:16px;color:#000;font-weight:normal;transform:scaleX(0.9038);transform-origin:0 0;">2026.02.11 09:12:18</div>
<div class="t" style="right:1085.25px;top:655.34px;font-size:12px;line-height:16px;color:#000;font-weight:normal;transform:scaleX(0.9800);transform-origin:100% 0;">xagusd</div>
<div class="t" style="right:1010.33px;top:655.34px;font-size:12px;line-height:16px;color:#000;font-weight:normal;transform:scaleX(0.8900);transform-origin:100% 0;">55142967415</div>
<div class="t" style="right:946.27px;top:655.34px;font-size:12px;line-height:16px;color:#000;font-weight:normal;transform:scaleX(0.9800);transform-origin:100% 0;">buy</div>
<div class="t" style="right:839.30px;top:655.34px;font-size:12px;line-height:16px;color:#000;font-weight:normal;transform:scaleX(0.8900);transform-origin:100% 0;">0.3</div>
<div class="t" style="right:732.32px;top:655.34px;font-size:12px;line-height:16px;color:#000;font-weight:normal;transform:scaleX(0.8900);transform-origin:100% 0;">84.100</div>
<div class="t" style="right:625.32px;top:655.34px;font-size:12px;line-height:16px;color:#000;font-weight:normal;transform:scaleX(0.8900);transform-origin:100% 0;">78.400</div>
<div class="t" style="right:518.32px;top:655.34px;font-size:12px;line-height:16px;color:#000;font-weight:normal;transform:scaleX(0.8900);transform-origin:100% 0;">89.800</div>
<div class="t" style="right:378.25px;top:655.34px;font-size:12px;line-height:16px;color:#000;font-weight:normal;transform:scaleX(0.8948);transform-origin:100% 0;">2026.02.12 18:16:00</div>
<div class="t" style="right:271.32px;top:655.34px;font-size:12px;line-height:16px;color:#000;font-weight:normal;transform:scaleX(0.8900);transform-origin:100% 0;">78.400</div>
<div class="t" style="right:164.35px;top:655.34px;font-size:12px;line-height:16px;color:#ff0000;font-weight:normal;transform:scaleX(0.9205);transform-origin:100% 0;">-10.35</div>
<div class="t" style="right:20.35px;top:655.34px;font-size:12px;line-height:16px;color:#ff0000;font-weight:normal;transform:scaleX(0.9210);transform-origin:100% 0;">-8 550.00</div>
<div class="b" style="left:50px;top:673px;width:1299px;height:20px;background:#bdbdbd;"></div>
<svg class="s" style="left:52px;top:675px" width="14" height="14" viewBox="0 0 14 14"><circle cx="7.3" cy="7.2" r="5.3" fill="none" stroke="#000" stroke-width="1.1"/><path d="M7.3 4.2V10.2M4.3 7.2H10.3" stroke="#000" stroke-width="1.1"/></svg>
<div class="t" style="left:71.00px;top:674.84px;font-size:12px;line-height:16px;color:#000;font-weight:bold;transform:scaleX(1.0105);transform-origin:0 0;">Profitto: 94 033.39</div>
<div class="t" style="left:182.00px;top:674.84px;font-size:12px;line-height:16px;color:#000;font-weight:bold;transform:scaleX(0.9626);transform-origin:0 0;">Credito: 0.00</div>
<div class="t" style="left:259.00px;top:674.84px;font-size:12px;line-height:16px;color:#000;font-weight:bold;transform:scaleX(0.9868);transform-origin:0 0;">Deposito: 10 000.00</div>
<div class="t" style="left:376.20px;top:674.84px;font-size:12px;line-height:16px;color:#000;font-weight:bold;transform:scaleX(0.9742);transform-origin:0 0;">Prelievo: 0.00</div>
<div class="t" style="left:458.60px;top:674.84px;font-size:12px;line-height:16px;color:#000;font-weight:bold;transform:scaleX(0.9632);transform-origin:0 0;">Bilancio: 104 033.39</div>
<div class="t" style="right:164.76px;top:674.84px;font-size:12px;line-height:16px;color:#000;font-weight:bold;transform:scaleX(1.0165);transform-origin:100% 0;">-1 191.61</div>
<div class="t" style="right:21.62px;top:674.84px;font-size:12px;line-height:16px;color:#000;font-weight:bold;transform:scaleX(1.0206);transform-origin:100% 0;">95 225.00</div>
<div class="b" style="left:50px;top:703px;width:222px;height:1px;background:#000;"></div>
<div class="b" style="left:349px;top:703px;width:1017px;height:1px;background:#000;"></div>
<div class="b" style="left:1349px;top:149px;width:17px;height:553px;background:#ececec;"></div>
<div class="b" style="left:1350px;top:525px;width:15px;height:161px;background:#bdbdbd;"></div>
<svg class="s" style="left:1349px;top:150px" width="17" height="18" viewBox="0 0 17 18"><path d="M4.5 9.5L8.5 5.5L12.5 9.5" fill="none" stroke="#333" stroke-width="1.6"/></svg>
<svg class="s" style="left:1349px;top:686px" width="17" height="16" viewBox="0 0 17 16"><path d="M4.5 5.5L8.5 9.5L12.5 5.5" fill="none" stroke="#333" stroke-width="1.6"/></svg>
<div class="t" style="left:40px;top:704px;font-size:12px;line-height:12px;color:#222;transform:rotate(-90deg) translate(-5px,-6px);transform-origin:0 0;">Attrezzi</div>
</body></html>
